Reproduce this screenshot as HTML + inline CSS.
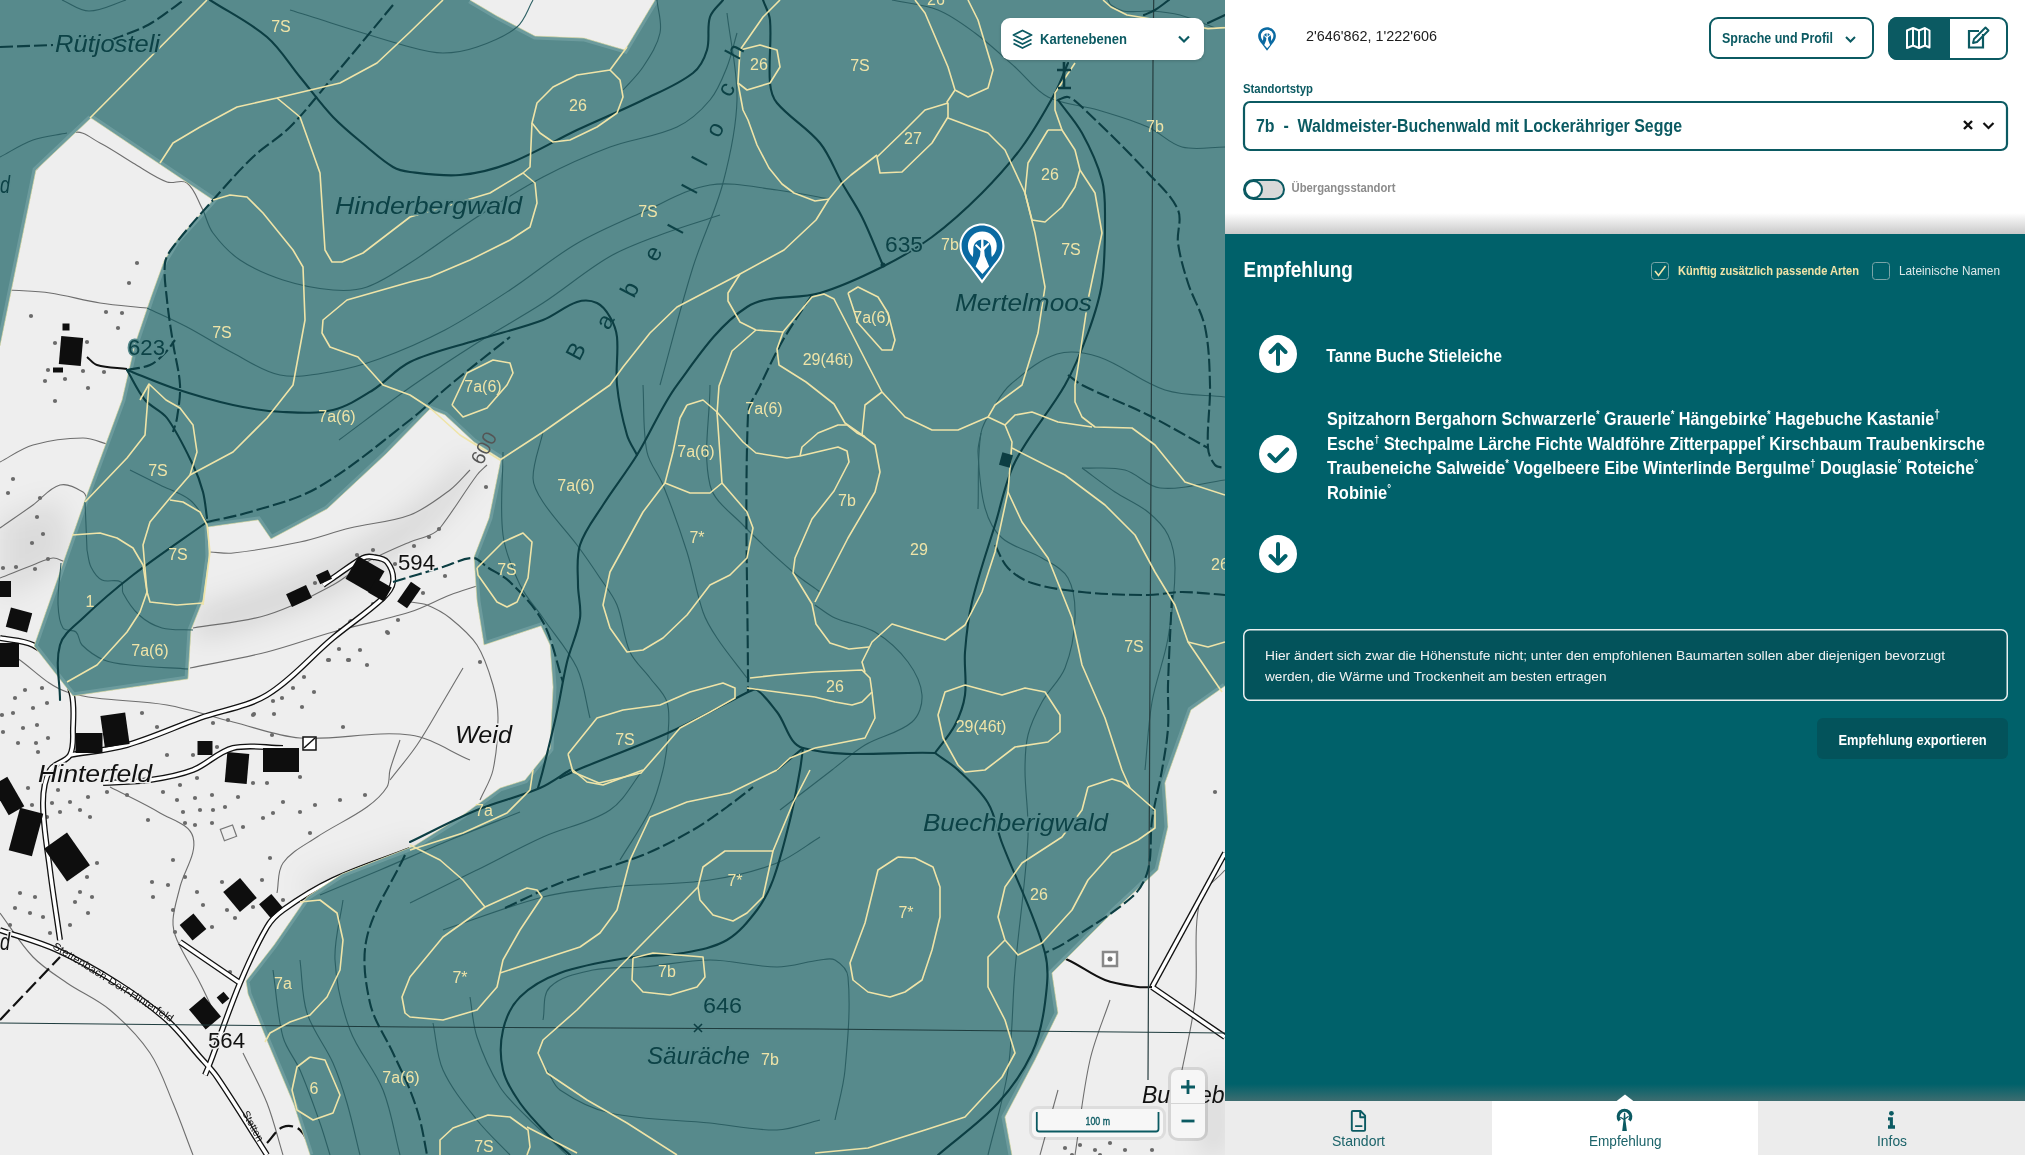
<!DOCTYPE html>
<html><head><meta charset="utf-8"><title>Empfehlung</title>
<style>
*{box-sizing:border-box;margin:0;padding:0}
html,body{width:2025px;height:1155px;overflow:hidden;background:#fff;font-family:"Liberation Sans",sans-serif}
#map{position:absolute;left:0;top:0;width:1225px;height:1155px;overflow:hidden}
#panel{position:absolute;left:1225px;top:0;width:800px;height:1155px;overflow:hidden}
</style></head><body>
<div id="map">
<svg width="1225" height="1155" viewBox="0 0 1225 1155" style="position:absolute;left:0;top:0">
<defs><linearGradient id="hs" x1="0" y1="0" x2="1" y2="1"><stop offset="0" stop-color="#f3f3f3"/><stop offset="1" stop-color="#e9e9e9"/></linearGradient></defs>
<rect width="1225" height="1155" fill="#eeeeee"/>
<filter id="bl" x="-20%" y="-20%" width="140%" height="140%"><feGaussianBlur stdDeviation="14"/></filter>
<g filter="url(#bl)" fill="#000"><path d="M195,640 C260,625 330,600 380,565 C420,540 450,510 480,470 L470,455 C430,500 380,535 330,560 C280,585 230,600 195,610 Z" opacity="0.10"/><path d="M0,520 L60,500 L70,560 L0,600 Z" opacity="0.08"/><path d="M1205,1085 L1225,1065 L1225,1155 L1200,1155 Z" opacity="0.10"/><path d="M300,880 L420,840 L440,870 L330,920 Z" opacity="0.07"/></g>
<path d="M36.0,170.0 C48.3,157.7 56.9,139.8 73.0,133.0 C81.8,129.3 91.4,138.7 100.0,143.0 C111.5,148.8 121.9,156.5 133.0,163.0 C144.2,169.5 154.8,177.5 167.0,182.0 C173.3,184.3 181.7,178.9 187.0,183.0 C195.3,189.4 197.7,201.0 203.0,210.0" fill="none" stroke="#6e6e6e" stroke-width="1.1"/>
<path d="M10.0,290.0 C23.3,291.0 36.8,291.1 50.0,293.0 C66.8,295.4 83.2,300.4 100.0,303.0 C115.6,305.4 131.3,306.3 147.0,308.0" fill="none" stroke="#6e6e6e" stroke-width="1.1"/>
<path d="M0.0,462.0 C11.0,456.3 21.1,448.4 33.0,445.0 C49.2,440.3 66.2,438.0 83.0,438.0 C92.3,438.0 101.0,442.7 110.0,445.0" fill="none" stroke="#6e6e6e" stroke-width="1.1"/>
<path d="M0.0,528.0 C11.0,520.3 22.1,512.8 33.0,505.0 C42.1,498.5 49.2,487.8 60.0,485.0 C67.8,483.0 76.1,487.8 83.0,492.0 C86.2,493.9 86.3,498.7 88.0,502.0" fill="none" stroke="#6e6e6e" stroke-width="1.1"/>
<path d="M0.0,578.0 C11.0,573.7 21.9,569.2 33.0,565.0 C39.6,562.5 46.0,558.7 53.0,558.0 C57.2,557.6 61.0,560.7 65.0,562.0" fill="none" stroke="#6e6e6e" stroke-width="1.1"/>
<path d="M193.0,628.0 C217.7,623.7 243.1,622.4 267.0,615.0 C290.1,607.9 311.6,596.3 333.0,585.0 C345.1,578.6 355.1,568.7 367.0,562.0 C380.8,554.3 395.5,548.2 410.0,542.0 C416.5,539.2 423.6,538.0 430.0,535.0 C433.7,533.3 437.5,531.2 440.0,528.0 C453.3,511.0 464.1,492.3 477.0,475.0 C479.8,471.2 483.7,468.3 487.0,465.0" fill="none" stroke="#6e6e6e" stroke-width="1.1"/>
<path d="M190.0,668.0 C215.7,662.7 241.6,658.4 267.0,652.0 C289.3,646.4 310.9,638.2 333.0,632.0 C358.5,624.9 384.7,620.0 410.0,612.0 C423.8,607.6 436.5,600.2 450.0,595.0 C459.8,591.2 470.0,588.3 480.0,585.0" fill="none" stroke="#6e6e6e" stroke-width="1.1"/>
<path d="M210.0,552.0 C217.7,552.3 225.4,553.8 233.0,553.0 C255.5,550.5 277.9,546.7 300.0,542.0 C316.9,538.4 333.2,532.1 350.0,528.0 C369.9,523.1 390.9,522.3 410.0,515.0 C424.7,509.4 437.4,499.4 450.0,490.0 C457.5,484.3 463.3,476.7 470.0,470.0" fill="none" stroke="#6e6e6e" stroke-width="1.1"/>
<path d="M17.0,658.0 C33.7,669.3 47.8,686.0 67.0,692.0 C99.1,702.1 133.9,699.0 167.0,705.0 C189.4,709.0 211.0,716.5 233.0,722.0 C255.3,727.5 277.1,736.3 300.0,738.0 C336.6,740.7 373.6,730.3 410.0,735.0 C431.5,737.8 450.0,751.7 470.0,760.0" fill="none" stroke="#6e6e6e" stroke-width="1.1"/>
<path d="M410.0,602.0 C415.7,603.0 421.7,602.9 427.0,605.0 C435.2,608.3 443.1,612.5 450.0,618.0 C459.9,626.0 470.1,634.3 477.0,645.0 C484.8,657.1 489.0,671.2 493.0,685.0 C496.1,695.7 498.0,706.9 498.0,718.0 C498.0,735.4 496.7,753.0 493.0,770.0 C490.7,780.6 484.3,790.0 480.0,800.0" fill="none" stroke="#6e6e6e" stroke-width="1.1"/>
<path d="M463.0,668.0 C456.3,679.3 449.7,690.7 443.0,702.0 C434.4,716.4 426.4,731.1 417.0,745.0 C408.7,757.2 399.0,768.3 390.0,780.0" fill="none" stroke="#6e6e6e" stroke-width="1.1"/>
<path d="M110.0,787.0 C126.7,795.7 143.9,803.3 160.0,813.0 C171.7,820.0 189.5,823.9 193.0,837.0 C197.5,853.6 184.0,870.3 180.0,887.0 C177.4,897.9 173.6,908.8 173.0,920.0 C172.6,926.8 174.3,933.8 177.0,940.0 C183.4,954.9 192.6,968.5 200.0,983.0 C204.6,991.9 208.7,1001.0 213.0,1010.0" fill="none" stroke="#6e6e6e" stroke-width="1.1"/>
<path d="M0.0,913.0 C11.0,927.7 20.3,943.8 33.0,957.0 C42.9,967.3 55.2,974.9 67.0,983.0 C80.9,992.6 97.1,999.1 110.0,1010.0 C125.0,1022.6 139.0,1036.8 150.0,1053.0 C160.3,1068.2 165.9,1086.1 173.0,1103.0 C180.2,1120.1 186.3,1137.7 193.0,1155.0" fill="none" stroke="#6e6e6e" stroke-width="1.1"/>
<path d="M243.0,1053.0 C251.0,1069.7 260.3,1085.8 267.0,1103.0 C273.6,1119.9 277.7,1137.7 283.0,1155.0" fill="none" stroke="#6e6e6e" stroke-width="1.1"/>
<path d="M277.0,893.0 C279.0,883.0 277.1,871.3 283.0,863.0 C291.3,851.4 305.1,844.9 317.0,837.0 C333.2,826.2 351.2,818.3 367.0,807.0 C374.7,801.5 382.0,795.0 387.0,787.0 C390.0,782.1 388.5,775.5 390.0,770.0 C392.8,759.8 396.7,750.0 400.0,740.0" fill="none" stroke="#6e6e6e" stroke-width="1.1"/>
<path d="M1225.0,870.0 C1216.7,880.0 1202.9,887.3 1200.0,900.0 C1192.5,932.5 1198.7,966.8 1195.0,1000.0 C1192.0,1027.0 1185.0,1053.3 1180.0,1080.0" fill="none" stroke="#6e6e6e" stroke-width="1.1"/>
<path d="M1110.0,1000.0 C1103.3,1020.0 1094.6,1039.4 1090.0,1060.0 C1082.9,1091.3 1080.0,1123.3 1075.0,1155.0" fill="none" stroke="#6e6e6e" stroke-width="1.1"/>
<path d="M1058.0,1090.0 L1040.0,1155.0" fill="none" stroke="#6e6e6e" stroke-width="1.1"/>
<circle cx="137" cy="263" r="2.1" fill="#6a6a6a"/>
<circle cx="129" cy="283" r="2.1" fill="#6a6a6a"/>
<circle cx="31" cy="316" r="2.1" fill="#6a6a6a"/>
<circle cx="106" cy="312" r="2.1" fill="#6a6a6a"/>
<circle cx="122" cy="313" r="2.1" fill="#6a6a6a"/>
<circle cx="118" cy="328" r="2.1" fill="#6a6a6a"/>
<circle cx="55" cy="343" r="2.1" fill="#6a6a6a"/>
<circle cx="87" cy="342" r="2.1" fill="#6a6a6a"/>
<circle cx="48" cy="370" r="2.1" fill="#6a6a6a"/>
<circle cx="83" cy="371" r="2.1" fill="#6a6a6a"/>
<circle cx="104" cy="372" r="2.1" fill="#6a6a6a"/>
<circle cx="45" cy="381" r="2.1" fill="#6a6a6a"/>
<circle cx="65" cy="379" r="2.1" fill="#6a6a6a"/>
<circle cx="88" cy="388" r="2.1" fill="#6a6a6a"/>
<circle cx="55" cy="401" r="2.1" fill="#6a6a6a"/>
<circle cx="13" cy="479" r="2.1" fill="#6a6a6a"/>
<circle cx="8" cy="493" r="2.1" fill="#6a6a6a"/>
<circle cx="40" cy="498" r="2.1" fill="#6a6a6a"/>
<circle cx="37" cy="517" r="2.1" fill="#6a6a6a"/>
<circle cx="43" cy="534" r="2.1" fill="#6a6a6a"/>
<circle cx="32" cy="543" r="2.1" fill="#6a6a6a"/>
<circle cx="48" cy="559" r="2.1" fill="#6a6a6a"/>
<circle cx="35" cy="569" r="2.1" fill="#6a6a6a"/>
<circle cx="3" cy="568" r="2.1" fill="#6a6a6a"/>
<circle cx="16" cy="567" r="2.1" fill="#6a6a6a"/>
<circle cx="357" cy="555" r="2.1" fill="#6a6a6a"/>
<circle cx="373" cy="550" r="2.1" fill="#6a6a6a"/>
<circle cx="395" cy="564" r="2.1" fill="#6a6a6a"/>
<circle cx="414" cy="546" r="2.1" fill="#6a6a6a"/>
<circle cx="429" cy="537" r="2.1" fill="#6a6a6a"/>
<circle cx="439" cy="529" r="2.1" fill="#6a6a6a"/>
<circle cx="486" cy="487" r="2.1" fill="#6a6a6a"/>
<circle cx="315" cy="583" r="2.1" fill="#6a6a6a"/>
<circle cx="383" cy="595" r="2.1" fill="#6a6a6a"/>
<circle cx="373" cy="604" r="2.1" fill="#6a6a6a"/>
<circle cx="423" cy="593" r="2.1" fill="#6a6a6a"/>
<circle cx="445" cy="576" r="2.1" fill="#6a6a6a"/>
<circle cx="351" cy="621" r="2.1" fill="#6a6a6a"/>
<circle cx="340" cy="630" r="2.1" fill="#6a6a6a"/>
<circle cx="398" cy="620" r="2.1" fill="#6a6a6a"/>
<circle cx="387" cy="632" r="2.1" fill="#6a6a6a"/>
<circle cx="339" cy="649" r="2.1" fill="#6a6a6a"/>
<circle cx="360" cy="650" r="2.1" fill="#6a6a6a"/>
<circle cx="329" cy="660" r="2.1" fill="#6a6a6a"/>
<circle cx="349" cy="660" r="2.1" fill="#6a6a6a"/>
<circle cx="367" cy="665" r="2.1" fill="#6a6a6a"/>
<circle cx="304" cy="677" r="2.1" fill="#6a6a6a"/>
<circle cx="293" cy="688" r="2.1" fill="#6a6a6a"/>
<circle cx="314" cy="692" r="2.1" fill="#6a6a6a"/>
<circle cx="273" cy="701" r="2.1" fill="#6a6a6a"/>
<circle cx="282" cy="698" r="2.1" fill="#6a6a6a"/>
<circle cx="302" cy="707" r="2.1" fill="#6a6a6a"/>
<circle cx="254" cy="714" r="2.1" fill="#6a6a6a"/>
<circle cx="274" cy="714" r="2.1" fill="#6a6a6a"/>
<circle cx="480" cy="662" r="2.1" fill="#6a6a6a"/>
<circle cx="338" cy="632" r="2.1" fill="#6a6a6a"/>
<circle cx="350" cy="622" r="2.1" fill="#6a6a6a"/>
<circle cx="328" cy="660" r="2.1" fill="#6a6a6a"/>
<circle cx="348" cy="660" r="2.1" fill="#6a6a6a"/>
<circle cx="388" cy="633" r="2.1" fill="#6a6a6a"/>
<circle cx="253" cy="715" r="2.1" fill="#6a6a6a"/>
<circle cx="228" cy="720" r="2.1" fill="#6a6a6a"/>
<circle cx="213" cy="723" r="2.1" fill="#6a6a6a"/>
<circle cx="157" cy="727" r="2.1" fill="#6a6a6a"/>
<circle cx="142" cy="713" r="2.1" fill="#6a6a6a"/>
<circle cx="167" cy="755" r="2.1" fill="#6a6a6a"/>
<circle cx="193" cy="755" r="2.1" fill="#6a6a6a"/>
<circle cx="217" cy="747" r="2.1" fill="#6a6a6a"/>
<circle cx="272" cy="735" r="2.1" fill="#6a6a6a"/>
<circle cx="343" cy="727" r="2.1" fill="#6a6a6a"/>
<circle cx="25" cy="690" r="2.1" fill="#6a6a6a"/>
<circle cx="15" cy="698" r="2.1" fill="#6a6a6a"/>
<circle cx="42" cy="688" r="2.1" fill="#6a6a6a"/>
<circle cx="33" cy="708" r="2.1" fill="#6a6a6a"/>
<circle cx="47" cy="703" r="2.1" fill="#6a6a6a"/>
<circle cx="2" cy="715" r="2.1" fill="#6a6a6a"/>
<circle cx="13" cy="713" r="2.1" fill="#6a6a6a"/>
<circle cx="23" cy="728" r="2.1" fill="#6a6a6a"/>
<circle cx="37" cy="725" r="2.1" fill="#6a6a6a"/>
<circle cx="3" cy="732" r="2.1" fill="#6a6a6a"/>
<circle cx="18" cy="743" r="2.1" fill="#6a6a6a"/>
<circle cx="36" cy="743" r="2.1" fill="#6a6a6a"/>
<circle cx="48" cy="738" r="2.1" fill="#6a6a6a"/>
<circle cx="38" cy="752" r="2.1" fill="#6a6a6a"/>
<circle cx="28" cy="788" r="2.1" fill="#6a6a6a"/>
<circle cx="58" cy="790" r="2.1" fill="#6a6a6a"/>
<circle cx="88" cy="797" r="2.1" fill="#6a6a6a"/>
<circle cx="70" cy="802" r="2.1" fill="#6a6a6a"/>
<circle cx="107" cy="792" r="2.1" fill="#6a6a6a"/>
<circle cx="127" cy="795" r="2.1" fill="#6a6a6a"/>
<circle cx="163" cy="792" r="2.1" fill="#6a6a6a"/>
<circle cx="180" cy="785" r="2.1" fill="#6a6a6a"/>
<circle cx="197" cy="778" r="2.1" fill="#6a6a6a"/>
<circle cx="52" cy="803" r="2.1" fill="#6a6a6a"/>
<circle cx="32" cy="805" r="2.1" fill="#6a6a6a"/>
<circle cx="60" cy="812" r="2.1" fill="#6a6a6a"/>
<circle cx="80" cy="810" r="2.1" fill="#6a6a6a"/>
<circle cx="47" cy="817" r="2.1" fill="#6a6a6a"/>
<circle cx="35" cy="815" r="2.1" fill="#6a6a6a"/>
<circle cx="90" cy="817" r="2.1" fill="#6a6a6a"/>
<circle cx="177" cy="800" r="2.1" fill="#6a6a6a"/>
<circle cx="195" cy="798" r="2.1" fill="#6a6a6a"/>
<circle cx="212" cy="795" r="2.1" fill="#6a6a6a"/>
<circle cx="238" cy="797" r="2.1" fill="#6a6a6a"/>
<circle cx="253" cy="783" r="2.1" fill="#6a6a6a"/>
<circle cx="267" cy="783" r="2.1" fill="#6a6a6a"/>
<circle cx="283" cy="802" r="2.1" fill="#6a6a6a"/>
<circle cx="300" cy="777" r="2.1" fill="#6a6a6a"/>
<circle cx="183" cy="812" r="2.1" fill="#6a6a6a"/>
<circle cx="200" cy="810" r="2.1" fill="#6a6a6a"/>
<circle cx="213" cy="810" r="2.1" fill="#6a6a6a"/>
<circle cx="225" cy="807" r="2.1" fill="#6a6a6a"/>
<circle cx="185" cy="823" r="2.1" fill="#6a6a6a"/>
<circle cx="195" cy="825" r="2.1" fill="#6a6a6a"/>
<circle cx="212" cy="823" r="2.1" fill="#6a6a6a"/>
<circle cx="148" cy="820" r="2.1" fill="#6a6a6a"/>
<circle cx="243" cy="827" r="2.1" fill="#6a6a6a"/>
<circle cx="263" cy="818" r="2.1" fill="#6a6a6a"/>
<circle cx="273" cy="813" r="2.1" fill="#6a6a6a"/>
<circle cx="300" cy="812" r="2.1" fill="#6a6a6a"/>
<circle cx="315" cy="805" r="2.1" fill="#6a6a6a"/>
<circle cx="340" cy="800" r="2.1" fill="#6a6a6a"/>
<circle cx="365" cy="795" r="2.1" fill="#6a6a6a"/>
<circle cx="310" cy="833" r="2.1" fill="#6a6a6a"/>
<circle cx="270" cy="858" r="2.1" fill="#6a6a6a"/>
<circle cx="173" cy="860" r="2.1" fill="#6a6a6a"/>
<circle cx="185" cy="877" r="2.1" fill="#6a6a6a"/>
<circle cx="97" cy="863" r="2.1" fill="#6a6a6a"/>
<circle cx="87" cy="877" r="2.1" fill="#6a6a6a"/>
<circle cx="80" cy="892" r="2.1" fill="#6a6a6a"/>
<circle cx="92" cy="897" r="2.1" fill="#6a6a6a"/>
<circle cx="75" cy="902" r="2.1" fill="#6a6a6a"/>
<circle cx="20" cy="893" r="2.1" fill="#6a6a6a"/>
<circle cx="35" cy="897" r="2.1" fill="#6a6a6a"/>
<circle cx="15" cy="908" r="2.1" fill="#6a6a6a"/>
<circle cx="30" cy="913" r="2.1" fill="#6a6a6a"/>
<circle cx="43" cy="917" r="2.1" fill="#6a6a6a"/>
<circle cx="10" cy="925" r="2.1" fill="#6a6a6a"/>
<circle cx="70" cy="925" r="2.1" fill="#6a6a6a"/>
<circle cx="88" cy="913" r="2.1" fill="#6a6a6a"/>
<circle cx="50" cy="933" r="2.1" fill="#6a6a6a"/>
<circle cx="152" cy="882" r="2.1" fill="#6a6a6a"/>
<circle cx="168" cy="885" r="2.1" fill="#6a6a6a"/>
<circle cx="153" cy="897" r="2.1" fill="#6a6a6a"/>
<circle cx="197" cy="892" r="2.1" fill="#6a6a6a"/>
<circle cx="203" cy="905" r="2.1" fill="#6a6a6a"/>
<circle cx="222" cy="882" r="2.1" fill="#6a6a6a"/>
<circle cx="227" cy="910" r="2.1" fill="#6a6a6a"/>
<circle cx="235" cy="918" r="2.1" fill="#6a6a6a"/>
<circle cx="253" cy="907" r="2.1" fill="#6a6a6a"/>
<circle cx="262" cy="880" r="2.1" fill="#6a6a6a"/>
<circle cx="283" cy="900" r="2.1" fill="#6a6a6a"/>
<circle cx="175" cy="932" r="2.1" fill="#6a6a6a"/>
<circle cx="212" cy="927" r="2.1" fill="#6a6a6a"/>
<circle cx="173" cy="910" r="2.1" fill="#6a6a6a"/>
<circle cx="230" cy="972" r="2.1" fill="#6a6a6a"/>
<circle cx="1215" cy="792" r="2.1" fill="#6a6a6a"/>
<circle cx="1152" cy="1150" r="2.1" fill="#6a6a6a"/>
<circle cx="1065" cy="1148" r="2.1" fill="#6a6a6a"/>
<circle cx="1080" cy="1145" r="2.1" fill="#6a6a6a"/>
<circle cx="1095" cy="1150" r="2.1" fill="#6a6a6a"/>
<circle cx="1110" cy="1143" r="2.1" fill="#6a6a6a"/>
<circle cx="1125" cy="1150" r="2.1" fill="#6a6a6a"/>
<circle cx="1072" cy="1155" r="2.1" fill="#6a6a6a"/>
<circle cx="1100" cy="1155" r="2.1" fill="#6a6a6a"/>
<path d="M0.0,638.0 C11.0,640.3 22.9,640.0 33.0,645.0 C43.6,650.3 52.7,658.7 60.0,668.0 C66.1,675.8 69.9,685.4 72.0,695.0 C74.3,705.8 73.4,717.0 73.0,728.0 C72.7,737.1 74.3,747.1 70.0,755.0 C66.0,762.3 54.1,762.7 50.0,770.0 C44.5,779.8 43.0,791.8 43.0,803.0 C43.0,825.5 47.2,847.7 50.0,870.0 C52.9,893.4 56.7,916.7 60.0,940.0" fill="none" stroke="#111" stroke-width="6" stroke-linejoin="round"/>
<path d="M70.0,755.0 C89.0,751.7 108.4,750.3 127.0,745.0 C152.0,737.9 175.6,726.7 200.0,718.0 C222.2,710.1 246.8,707.2 267.0,695.0 C291.9,680.0 310.7,656.6 333.0,638.0 C349.4,624.3 367.4,612.6 383.0,598.0 C387.6,593.7 392.3,588.3 393.0,582.0 C393.8,575.1 391.3,567.4 387.0,562.0 C383.9,558.1 377.9,557.8 373.0,557.0 C369.7,556.4 366.0,556.4 363.0,558.0 C352.4,563.6 343.0,571.3 333.0,578.0 C329.6,580.3 326.3,582.7 323.0,585.0" fill="none" stroke="#111" stroke-width="6" stroke-linejoin="round"/>
<path d="M103.0,783.0 C118.7,782.0 134.5,782.2 150.0,780.0 C164.6,777.9 179.3,775.3 193.0,770.0 C207.2,764.5 218.2,751.6 233.0,748.0 C249.2,744.0 266.3,748.0 283.0,748.0" fill="none" stroke="#111" stroke-width="6" stroke-linejoin="round"/>
<path d="M0.0,930.0 C19.0,936.7 38.7,941.7 57.0,950.0 C77.8,959.4 97.7,970.7 117.0,983.0 C134.5,994.1 151.5,1006.2 167.0,1020.0 C179.3,1031.0 189.1,1044.6 200.0,1057.0 C205.8,1063.6 212.1,1069.8 217.0,1077.0 C234.4,1102.5 250.3,1129.0 267.0,1155.0" fill="none" stroke="#111" stroke-width="6" stroke-linejoin="round"/>
<path d="M410.0,850.0 C384.3,860.0 357.9,868.2 333.0,880.0 C315.4,888.3 298.8,898.7 283.0,910.0 C276.7,914.5 270.9,920.3 267.0,927.0 C256.5,944.9 248.0,963.9 240.0,983.0 C229.0,1009.3 220.1,1036.4 210.0,1063.0 C208.5,1067.1 206.7,1071.0 205.0,1075.0" fill="none" stroke="#111" stroke-width="6" stroke-linejoin="round"/>
<path d="M180.0,942.0 L240.0,983.0" fill="none" stroke="#111" stroke-width="6" stroke-linejoin="round"/>
<path d="M1152.0,987.0 L1225.0,853.0" fill="none" stroke="#111" stroke-width="6" stroke-linejoin="round"/>
<path d="M1152.0,987.0 L1225.0,1037.0" fill="none" stroke="#111" stroke-width="6" stroke-linejoin="round"/>
<path d="M0.0,638.0 C11.0,640.3 22.9,640.0 33.0,645.0 C43.6,650.3 52.7,658.7 60.0,668.0 C66.1,675.8 69.9,685.4 72.0,695.0 C74.3,705.8 73.4,717.0 73.0,728.0 C72.7,737.1 74.3,747.1 70.0,755.0 C66.0,762.3 54.1,762.7 50.0,770.0 C44.5,779.8 43.0,791.8 43.0,803.0 C43.0,825.5 47.2,847.7 50.0,870.0 C52.9,893.4 56.7,916.7 60.0,940.0" fill="none" stroke="#fff" stroke-width="3.4" stroke-linejoin="round"/>
<path d="M70.0,755.0 C89.0,751.7 108.4,750.3 127.0,745.0 C152.0,737.9 175.6,726.7 200.0,718.0 C222.2,710.1 246.8,707.2 267.0,695.0 C291.9,680.0 310.7,656.6 333.0,638.0 C349.4,624.3 367.4,612.6 383.0,598.0 C387.6,593.7 392.3,588.3 393.0,582.0 C393.8,575.1 391.3,567.4 387.0,562.0 C383.9,558.1 377.9,557.8 373.0,557.0 C369.7,556.4 366.0,556.4 363.0,558.0 C352.4,563.6 343.0,571.3 333.0,578.0 C329.6,580.3 326.3,582.7 323.0,585.0" fill="none" stroke="#fff" stroke-width="3.4" stroke-linejoin="round"/>
<path d="M103.0,783.0 C118.7,782.0 134.5,782.2 150.0,780.0 C164.6,777.9 179.3,775.3 193.0,770.0 C207.2,764.5 218.2,751.6 233.0,748.0 C249.2,744.0 266.3,748.0 283.0,748.0" fill="none" stroke="#fff" stroke-width="3.4" stroke-linejoin="round"/>
<path d="M0.0,930.0 C19.0,936.7 38.7,941.7 57.0,950.0 C77.8,959.4 97.7,970.7 117.0,983.0 C134.5,994.1 151.5,1006.2 167.0,1020.0 C179.3,1031.0 189.1,1044.6 200.0,1057.0 C205.8,1063.6 212.1,1069.8 217.0,1077.0 C234.4,1102.5 250.3,1129.0 267.0,1155.0" fill="none" stroke="#fff" stroke-width="3.4" stroke-linejoin="round"/>
<path d="M410.0,850.0 C384.3,860.0 357.9,868.2 333.0,880.0 C315.4,888.3 298.8,898.7 283.0,910.0 C276.7,914.5 270.9,920.3 267.0,927.0 C256.5,944.9 248.0,963.9 240.0,983.0 C229.0,1009.3 220.1,1036.4 210.0,1063.0 C208.5,1067.1 206.7,1071.0 205.0,1075.0" fill="none" stroke="#fff" stroke-width="3.4" stroke-linejoin="round"/>
<path d="M180.0,942.0 L240.0,983.0" fill="none" stroke="#fff" stroke-width="3.4" stroke-linejoin="round"/>
<path d="M1152.0,987.0 L1225.0,853.0" fill="none" stroke="#fff" stroke-width="3.4" stroke-linejoin="round"/>
<path d="M1152.0,987.0 L1225.0,1037.0" fill="none" stroke="#fff" stroke-width="3.4" stroke-linejoin="round"/>
<path d="M0.0,1020.0 L60.0,957.0" fill="none" stroke="#111" stroke-width="2.2" stroke-dasharray="14 5"/>
<path d="M267.0,1143.0 C272.3,1137.7 276.0,1129.8 283.0,1127.0 C288.4,1124.9 295.8,1126.1 300.0,1130.0 C306.9,1136.4 308.7,1146.7 313.0,1155.0" fill="none" stroke="#111" stroke-width="2.2" stroke-dasharray="14 5"/>
<path d="M1045.0,953.0 C1052.7,955.3 1060.7,956.7 1068.0,960.0 C1080.8,965.8 1091.9,975.0 1105.0,980.0 C1115.5,984.0 1126.9,985.3 1138.0,987.0 C1142.6,987.7 1147.3,987.0 1152.0,987.0" fill="none" stroke="#111" stroke-width="2"/>
<path d="M87.0,357.0 C90.3,359.7 92.9,363.8 97.0,365.0 C106.7,367.9 117.0,367.7 127.0,369.0" fill="none" stroke="#111" stroke-width="2"/>
<rect x="60.0" y="337.0" width="22" height="28" fill="#0e0e0e" transform="rotate(5 71 351)"/>
<rect x="62.5" y="323.5" width="7" height="7" fill="#0e0e0e" transform="rotate(0 66 327)"/>
<rect x="53.0" y="367.5" width="10" height="5" fill="#0e0e0e" transform="rotate(0 58 370)"/>
<rect x="-1.0" y="581.0" width="12" height="16" fill="#0e0e0e" transform="rotate(0 5 589)"/>
<rect x="8.0" y="610.0" width="22" height="20" fill="#0e0e0e" transform="rotate(15 19 620)"/>
<rect x="-1.0" y="643.0" width="20" height="24" fill="#0e0e0e" transform="rotate(0 9 655)"/>
<rect x="75.5" y="733.0" width="27" height="20" fill="#0e0e0e" transform="rotate(0 89 743)"/>
<rect x="102.5" y="714.0" width="25" height="32" fill="#0e0e0e" transform="rotate(-8 115 730)"/>
<rect x="197.5" y="741.0" width="15" height="14" fill="#0e0e0e" transform="rotate(0 205 748)"/>
<rect x="226.0" y="753.0" width="22" height="30" fill="#0e0e0e" transform="rotate(5 237 768)"/>
<rect x="263.0" y="748.0" width="36" height="24" fill="#0e0e0e" transform="rotate(0 281 760)"/>
<rect x="288.0" y="589.0" width="22" height="14" fill="#0e0e0e" transform="rotate(-25 299 596)"/>
<rect x="317.5" y="572.0" width="13" height="10" fill="#0e0e0e" transform="rotate(-25 324 577)"/>
<rect x="350.0" y="562.0" width="30" height="26" fill="#0e0e0e" transform="rotate(30 365 575)"/>
<rect x="371.0" y="582.0" width="18" height="16" fill="#0e0e0e" transform="rotate(30 380 590)"/>
<rect x="403.0" y="583.0" width="12" height="24" fill="#0e0e0e" transform="rotate(35 409 595)"/>
<rect x="-1.0" y="779.0" width="18" height="34" fill="#0e0e0e" transform="rotate(-30 8 796)"/>
<rect x="14.0" y="810.0" width="24" height="44" fill="#0e0e0e" transform="rotate(15 26 832)"/>
<rect x="53.0" y="837.0" width="28" height="40" fill="#0e0e0e" transform="rotate(-35 67 857)"/>
<rect x="229.0" y="882.0" width="22" height="26" fill="#0e0e0e" transform="rotate(-40 240 895)"/>
<rect x="263.0" y="897.0" width="16" height="18" fill="#0e0e0e" transform="rotate(-40 271 906)"/>
<rect x="184.0" y="917.0" width="18" height="20" fill="#0e0e0e" transform="rotate(-40 193 927)"/>
<rect x="195.0" y="1000.0" width="20" height="26" fill="#0e0e0e" transform="rotate(-40 205 1013)"/>
<rect x="218.5" y="993.5" width="9" height="9" fill="#0e0e0e" transform="rotate(-40 223 998)"/>
<path d="M0,0 H1225 V1155 H0 Z M91.0,118.0 L213.0,200.0 L197.0,218.0 L177.0,240.0 L164.0,261.0 L151.0,297.0 L135.0,344.0 L122.0,400.0 L85.0,500.0 L34.0,646.0 L73.0,696.0 L188.0,679.0 L191.0,630.0 L203.0,600.0 L209.0,557.0 L208.0,527.0 L258.0,520.0 L271.0,539.0 L327.0,509.0 L386.0,454.0 L430.0,409.0 L445.0,415.0 L474.0,442.0 L501.0,459.0 L489.0,518.0 L474.0,557.0 L477.0,601.0 L484.0,645.0 L541.0,626.0 L550.0,645.0 L553.0,687.0 L550.0,749.0 L525.0,780.0 L500.0,788.0 L463.0,815.0 L414.0,846.0 L342.0,874.0 L307.0,897.0 L274.0,945.0 L246.0,981.0 L248.0,994.0 L268.0,1043.0 L294.0,1105.0 L310.0,1155.0 L0.0,1155.0 L0.0,346.0 L36.0,170.0 Z M470.0,0.0 L497.0,16.0 L535.0,36.0 L584.0,38.0 L625.0,50.0 L655.0,0.0 Z M1225.0,686.0 L1191.0,710.0 L1165.0,783.0 L1168.0,827.0 L1158.0,870.0 L1115.0,910.0 L1052.0,973.0 L1058.0,1013.0 L1035.0,1060.0 L1005.0,1117.0 L1012.0,1155.0 L1225.0,1155.0 Z" fill="#578a8c" fill-rule="evenodd"/>
<clipPath id="tc"><path d="M0,0 H1225 V1155 H0 Z M91.0,118.0 L213.0,200.0 L197.0,218.0 L177.0,240.0 L164.0,261.0 L151.0,297.0 L135.0,344.0 L122.0,400.0 L85.0,500.0 L34.0,646.0 L73.0,696.0 L188.0,679.0 L191.0,630.0 L203.0,600.0 L209.0,557.0 L208.0,527.0 L258.0,520.0 L271.0,539.0 L327.0,509.0 L386.0,454.0 L430.0,409.0 L445.0,415.0 L474.0,442.0 L501.0,459.0 L489.0,518.0 L474.0,557.0 L477.0,601.0 L484.0,645.0 L541.0,626.0 L550.0,645.0 L553.0,687.0 L550.0,749.0 L525.0,780.0 L500.0,788.0 L463.0,815.0 L414.0,846.0 L342.0,874.0 L307.0,897.0 L274.0,945.0 L246.0,981.0 L248.0,994.0 L268.0,1043.0 L294.0,1105.0 L310.0,1155.0 L0.0,1155.0 L0.0,346.0 L36.0,170.0 Z M470.0,0.0 L497.0,16.0 L535.0,36.0 L584.0,38.0 L625.0,50.0 L655.0,0.0 Z M1225.0,686.0 L1191.0,710.0 L1165.0,783.0 L1168.0,827.0 L1158.0,870.0 L1115.0,910.0 L1052.0,973.0 L1058.0,1013.0 L1035.0,1060.0 L1005.0,1117.0 L1012.0,1155.0 L1225.0,1155.0 Z" clip-rule="evenodd"/></clipPath>
<path d="M91.0,118.0 L213.0,200.0 L197.0,218.0 L177.0,240.0 L164.0,261.0 L151.0,297.0 L135.0,344.0 L122.0,400.0 L85.0,500.0 L34.0,646.0 L73.0,696.0 L188.0,679.0 L191.0,630.0 L203.0,600.0 L209.0,557.0 L208.0,527.0 L258.0,520.0 L271.0,539.0 L327.0,509.0 L386.0,454.0 L430.0,409.0 L445.0,415.0 L474.0,442.0 L501.0,459.0 L489.0,518.0 L474.0,557.0 L477.0,601.0 L484.0,645.0 L541.0,626.0 L550.0,645.0 L553.0,687.0 L550.0,749.0 L525.0,780.0 L500.0,788.0 L463.0,815.0 L414.0,846.0 L342.0,874.0 L307.0,897.0 L274.0,945.0 L246.0,981.0 L248.0,994.0 L268.0,1043.0 L294.0,1105.0 L310.0,1155.0" fill="none" stroke="#79a6a8" stroke-width="7" stroke-opacity="0.6" clip-path="url(#tc)"/>
<path d="M91.0,118.0 L213.0,200.0 L197.0,218.0 L177.0,240.0 L164.0,261.0 L151.0,297.0 L135.0,344.0 L122.0,400.0 L85.0,500.0 L34.0,646.0 L73.0,696.0 L188.0,679.0 L191.0,630.0 L203.0,600.0 L209.0,557.0 L208.0,527.0 L258.0,520.0 L271.0,539.0 L327.0,509.0 L386.0,454.0 L430.0,409.0 L445.0,415.0 L474.0,442.0 L501.0,459.0 L489.0,518.0 L474.0,557.0 L477.0,601.0 L484.0,645.0 L541.0,626.0 L550.0,645.0 L553.0,687.0 L550.0,749.0 L525.0,780.0 L500.0,788.0 L463.0,815.0 L414.0,846.0 L342.0,874.0 L307.0,897.0 L274.0,945.0 L246.0,981.0 L248.0,994.0 L268.0,1043.0 L294.0,1105.0 L310.0,1155.0" fill="none" stroke="#efe4a8" stroke-width="1" stroke-opacity="0.6"/>
<path d="M0.0,346.0 L36.0,170.0 L91.0,118.0" fill="none" stroke="#79a6a8" stroke-width="7" stroke-opacity="0.6" clip-path="url(#tc)"/>
<path d="M0.0,346.0 L36.0,170.0 L91.0,118.0" fill="none" stroke="#efe4a8" stroke-width="1" stroke-opacity="0.6"/>
<path d="M470.0,0.0 L497.0,16.0 L535.0,36.0 L584.0,38.0 L625.0,50.0 L655.0,0.0" fill="none" stroke="#79a6a8" stroke-width="7" stroke-opacity="0.6" clip-path="url(#tc)"/>
<path d="M470.0,0.0 L497.0,16.0 L535.0,36.0 L584.0,38.0 L625.0,50.0 L655.0,0.0" fill="none" stroke="#efe4a8" stroke-width="1" stroke-opacity="0.6"/>
<path d="M1225.0,686.0 L1191.0,710.0 L1165.0,783.0 L1168.0,827.0 L1158.0,870.0 L1115.0,910.0 L1052.0,973.0 L1058.0,1013.0 L1035.0,1060.0 L1005.0,1117.0 L1012.0,1155.0" fill="none" stroke="#79a6a8" stroke-width="7" stroke-opacity="0.6" clip-path="url(#tc)"/>
<path d="M1225.0,686.0 L1191.0,710.0 L1165.0,783.0 L1168.0,827.0 L1158.0,870.0 L1115.0,910.0 L1052.0,973.0 L1058.0,1013.0 L1035.0,1060.0 L1005.0,1117.0 L1012.0,1155.0" fill="none" stroke="#efe4a8" stroke-width="1" stroke-opacity="0.6"/>
<path d="M87.0,550.0 C88.3,555.7 88.4,561.8 91.0,567.0 C93.5,572.1 96.9,577.5 102.0,580.0 C107.7,582.8 115.6,578.6 121.0,582.0 C124.2,584.0 121.2,589.7 123.0,593.0 C127.3,601.0 132.3,608.9 139.0,615.0 C145.6,620.9 153.5,625.6 162.0,628.0 C172.0,630.8 182.7,629.3 193.0,630.0" fill="none" stroke="#2c5f63" stroke-width="1.1"/>
<path d="M61.0,563.0 C60.0,576.7 57.6,590.3 58.0,604.0 C58.3,612.2 58.6,621.1 63.0,628.0 C65.5,631.8 72.6,629.0 76.0,632.0 C79.6,635.2 78.6,641.6 82.0,645.0 C88.3,651.3 95.8,656.6 104.0,660.0 C112.1,663.4 121.2,664.1 130.0,665.0 C149.3,667.1 168.7,667.7 188.0,669.0" fill="none" stroke="#2c5f63" stroke-width="1.1"/>
<path d="M85.0,502.0 C85.3,509.7 85.7,517.3 86.0,525.0 C86.3,533.3 86.7,541.7 87.0,550.0" fill="none" stroke="#2c5f63" stroke-width="1.1"/>
<path d="M130.0,470.0 C140.0,475.0 150.0,480.0 160.0,485.0 C170.0,490.0 181.2,493.1 190.0,500.0 C197.3,505.7 201.3,514.7 207.0,522.0" fill="none" stroke="#2c5f63" stroke-width="1.1"/>
<path d="M0.0,157.0 C11.0,151.3 21.4,144.2 33.0,140.0 C43.9,136.1 55.7,135.3 67.0,133.0" fill="none" stroke="#2c5f63" stroke-width="1.1"/>
<path d="M203.0,210.0 C206.3,217.7 208.0,226.3 213.0,233.0 C220.6,243.2 229.4,252.9 240.0,260.0 C253.1,268.8 268.0,275.1 283.0,280.0 C299.2,285.2 316.1,288.6 333.0,290.0 C344.3,290.9 356.3,290.8 367.0,287.0 C382.5,281.6 396.2,271.8 410.0,263.0 C432.9,248.5 454.3,231.7 477.0,217.0 C498.6,203.0 520.2,189.0 543.0,177.0 C564.7,165.6 587.1,155.6 610.0,147.0 C631.8,138.9 655.9,136.9 677.0,127.0 C689.9,121.0 700.9,110.9 710.0,100.0 C717.9,90.5 722.4,78.5 727.0,67.0 C731.4,56.0 733.7,44.3 737.0,33.0" fill="none" stroke="#2c5f63" stroke-width="1.1"/>
<path d="M147.0,308.0 C160.3,314.3 173.9,320.2 187.0,327.0 C202.6,335.2 217.3,344.9 233.0,353.0 C248.4,360.9 263.0,371.7 280.0,375.0 C296.4,378.2 313.5,374.7 330.0,372.0 C346.7,369.3 363.1,364.8 379.0,359.0 C401.6,350.8 423.7,341.2 445.0,330.0 C467.5,318.1 488.7,304.0 510.0,290.0 C532.4,275.3 552.9,257.6 576.0,244.0 C597.3,231.5 620.3,222.0 643.0,212.0 C665.0,202.3 686.2,188.9 710.0,185.0 C732.1,181.4 754.8,187.4 777.0,190.0 C794.5,192.1 811.7,196.0 829.0,199.0" fill="none" stroke="#2c5f63" stroke-width="1.1"/>
<path d="M339.0,440.0 C363.3,422.0 387.2,403.4 412.0,386.0 C433.3,371.1 455.1,356.9 477.0,343.0 C498.7,329.2 521.4,317.0 543.0,303.0 C565.5,288.4 585.8,270.5 609.0,257.0 C625.0,247.7 642.7,241.6 660.0,235.0 C679.7,227.5 700.0,221.7 720.0,215.0" fill="none" stroke="#2c5f63" stroke-width="1.1"/>
<path d="M290.0,10.0 C330.0,22.3 369.7,35.7 410.0,47.0 C420.8,50.0 431.8,53.0 443.0,53.0 C454.5,53.0 466.1,50.8 477.0,47.0 C491.1,42.1 505.6,36.6 517.0,27.0 C525.0,20.3 527.7,9.0 533.0,0.0" fill="none" stroke="#2c5f63" stroke-width="1.1"/>
<path d="M62.0,0.0 C71.0,3.7 79.3,11.0 89.0,11.0 C101.9,11.0 113.7,3.7 126.0,0.0" fill="none" stroke="#2c5f63" stroke-width="1.1"/>
<path d="M657.0,0.0 C658.0,11.0 662.3,22.2 660.0,33.0 C657.4,45.4 649.9,56.4 643.0,67.0 C637.5,75.5 629.7,82.3 623.0,90.0" fill="none" stroke="#2c5f63" stroke-width="1.1"/>
<path d="M660.0,385.0 C671.0,345.7 680.8,306.0 693.0,267.0 C701.9,238.6 715.4,211.8 723.0,183.0 C730.1,155.9 736.3,128.0 737.0,100.0 C737.7,70.8 730.3,42.0 727.0,13.0" fill="none" stroke="#2c5f63" stroke-width="1.1"/>
<path d="M892.0,0.0 C907.3,3.3 923.4,4.2 938.0,10.0 C951.5,15.4 963.3,24.4 975.0,33.0 C989.1,43.4 1001.8,55.5 1015.0,67.0 C1026.2,76.8 1034.8,90.2 1048.0,97.0 C1063.3,104.9 1081.5,105.1 1098.0,110.0 C1114.9,115.1 1131.9,119.9 1148.0,127.0 C1160.0,132.3 1169.3,143.7 1182.0,147.0 C1195.9,150.6 1210.7,147.0 1225.0,147.0" fill="none" stroke="#2c5f63" stroke-width="1.1"/>
<path d="M543.0,432.0 C539.7,447.3 533.0,462.3 533.0,478.0 C533.0,486.7 538.2,494.8 543.0,502.0 C553.0,517.3 566.0,530.4 577.0,545.0 C585.0,555.7 592.6,566.8 600.0,578.0 C605.9,586.8 613.0,595.1 617.0,605.0 C623.1,620.1 623.3,637.2 630.0,652.0 C634.5,662.0 643.5,669.2 650.0,678.0 C655.8,685.9 664.0,692.7 667.0,702.0 C670.3,712.5 668.6,724.0 668.0,735.0 C667.3,746.8 665.8,758.5 663.0,770.0 C659.7,783.6 656.0,797.3 650.0,810.0 C641.6,827.5 630.0,843.3 620.0,860.0" fill="none" stroke="#2c5f63" stroke-width="1.1"/>
<path d="M643.0,385.0 C644.3,407.3 642.6,430.1 647.0,452.0 C649.4,464.0 658.5,473.6 663.0,485.0 C671.8,507.0 679.9,529.4 687.0,552.0 C693.2,571.7 696.2,592.5 703.0,612.0 C706.2,621.3 711.5,629.8 717.0,638.0 C726.2,651.9 737.0,664.7 747.0,678.0" fill="none" stroke="#2c5f63" stroke-width="1.1"/>
<path d="M503.0,452.0 C503.0,479.7 499.5,507.6 503.0,535.0 C505.2,552.5 512.4,569.1 520.0,585.0 C525.8,597.1 535.4,606.9 543.0,618.0 C554.4,634.6 568.4,649.8 577.0,668.0 C584.3,683.6 585.7,701.3 590.0,718.0" fill="none" stroke="#2c5f63" stroke-width="1.1"/>
<path d="M710.0,385.0 C710.0,418.3 702.4,452.6 710.0,485.0 C714.0,501.8 731.1,512.5 743.0,525.0 C758.8,541.6 775.7,557.0 793.0,572.0 C801.4,579.4 811.0,585.3 820.0,592.0" fill="none" stroke="#2c5f63" stroke-width="1.1"/>
<path d="M981.0,433.0 C980.0,439.3 977.7,445.6 978.0,452.0 C979.0,470.8 979.9,489.9 985.0,508.0 C988.1,519.1 993.4,530.4 1002.0,538.0 C1013.2,547.8 1029.3,550.3 1042.0,558.0 C1051.4,563.7 1062.7,568.4 1068.0,578.0 C1074.5,589.9 1075.5,604.5 1075.0,618.0 C1074.4,635.0 1071.2,652.2 1065.0,668.0 C1060.0,680.7 1048.6,690.0 1042.0,702.0 C1036.2,712.5 1030.9,723.4 1028.0,735.0 C1025.2,746.4 1025.0,758.3 1025.0,770.0 C1025.0,792.4 1029.1,814.7 1028.0,837.0 C1025.8,881.5 1018.8,925.6 1015.0,970.0 C1012.1,1003.3 1012.8,1036.9 1008.0,1070.0 C1003.8,1098.8 994.7,1126.7 988.0,1155.0" fill="none" stroke="#2c5f63" stroke-width="1.1"/>
<path d="M815.0,605.0 C821.7,609.3 827.7,614.7 835.0,618.0 C847.9,623.8 862.9,624.7 875.0,632.0 C887.7,639.7 899.1,650.1 908.0,662.0 C915.1,671.6 921.2,683.1 922.0,695.0 C922.6,704.6 919.2,715.7 912.0,722.0 C898.9,733.5 880.0,736.0 865.0,745.0 C853.2,752.1 843.0,761.6 832.0,770.0 C814.6,783.3 797.3,796.7 780.0,810.0" fill="none" stroke="#2c5f63" stroke-width="1.1"/>
<path d="M1082.0,468.0 C1093.0,476.0 1103.7,484.5 1115.0,492.0 C1125.7,499.1 1138.0,503.9 1148.0,512.0 C1155.9,518.4 1163.6,525.8 1168.0,535.0 C1172.9,545.1 1175.0,556.8 1175.0,568.0 C1175.0,591.4 1172.0,614.9 1168.0,638.0 C1164.3,659.7 1155.8,680.3 1152.0,702.0 C1148.1,724.4 1147.3,747.3 1145.0,770.0" fill="none" stroke="#2c5f63" stroke-width="1.1"/>
<path d="M410.0,903.0 C432.3,892.0 454.7,881.1 477.0,870.0 C499.0,859.1 520.6,847.1 543.0,837.0 C564.9,827.1 590.0,823.4 610.0,810.0 C624.4,800.4 632.0,783.3 643.0,770.0" fill="none" stroke="#2c5f63" stroke-width="1.1"/>
<path d="M443.0,930.0 C476.3,919.0 509.0,905.8 543.0,897.0 C564.9,891.4 587.5,889.3 610.0,887.0 C643.2,883.6 676.9,884.8 710.0,880.0 C732.8,876.7 755.5,871.4 777.0,863.0 C792.6,856.9 805.7,845.7 820.0,837.0" fill="none" stroke="#2c5f63" stroke-width="1.1"/>
<path d="M433.0,1023.0 C436.3,1038.7 436.4,1055.4 443.0,1070.0 C451.3,1088.4 464.5,1104.2 477.0,1120.0 C486.9,1132.6 499.0,1143.3 510.0,1155.0" fill="none" stroke="#2c5f63" stroke-width="1.1"/>
<path d="M470.0,997.0 C472.3,1010.3 472.7,1024.2 477.0,1037.0 C482.8,1054.4 490.3,1071.4 500.0,1087.0 C507.1,1098.4 517.6,1107.4 527.0,1117.0 C539.9,1130.1 553.7,1142.3 567.0,1155.0" fill="none" stroke="#2c5f63" stroke-width="1.1"/>
<path d="M543.0,1020.0 C545.3,1009.0 542.0,995.0 550.0,987.0 C560.9,976.1 577.9,973.2 593.0,970.0 C609.3,966.5 626.4,968.4 643.0,967.0 C665.4,965.1 687.5,960.0 710.0,960.0 C732.5,960.0 754.5,967.0 777.0,967.0 C791.5,967.0 805.6,961.7 820.0,960.0 C825.0,959.4 830.7,957.4 835.0,960.0 C841.1,963.7 847.4,969.9 848.0,977.0 C850.8,1007.9 847.8,1039.1 845.0,1070.0 C843.5,1086.9 838.3,1103.3 835.0,1120.0" fill="none" stroke="#2c5f63" stroke-width="1.1"/>
<path d="M547.0,1070.0 C551.3,1076.7 553.4,1085.5 560.0,1090.0 C575.2,1100.3 592.1,1109.1 610.0,1113.0 C642.7,1120.2 676.7,1119.6 710.0,1123.0 C732.3,1125.3 754.6,1130.6 777.0,1130.0 C791.7,1129.6 805.7,1123.3 820.0,1120.0" fill="none" stroke="#2c5f63" stroke-width="1.1"/>
<path d="M273.0,970.0 C276.3,992.3 277.1,1015.2 283.0,1037.0 C286.2,1048.9 295.1,1058.6 300.0,1070.0 C307.5,1087.3 313.7,1105.2 320.0,1123.0 C323.7,1133.5 326.7,1144.3 330.0,1155.0" fill="none" stroke="#2c5f63" stroke-width="1.1"/>
<path d="M300.0,960.0 C302.3,977.7 301.6,996.0 307.0,1013.0 C312.7,1030.9 325.4,1045.8 333.0,1063.0 C338.7,1075.9 343.0,1089.4 347.0,1103.0 C352.0,1120.1 355.7,1137.7 360.0,1155.0" fill="none" stroke="#2c5f63" stroke-width="1.1"/>
<path d="M343.0,900.0 C340.3,920.0 333.9,939.9 335.0,960.0 C336.3,983.8 341.7,1007.6 350.0,1030.0 C357.9,1051.4 374.5,1068.8 383.0,1090.0 C391.3,1110.8 394.3,1133.3 400.0,1155.0" fill="none" stroke="#2c5f63" stroke-width="1.1"/>
<path d="M320.0,895.0 C340.0,886.7 360.0,878.4 380.0,870.0 C403.4,860.1 426.5,849.7 450.0,840.0 C473.2,830.4 496.7,821.3 520.0,812.0" fill="none" stroke="#2c5f63" stroke-width="1.1"/>
<path d="M978.0,509.0 C979.0,483.7 976.9,458.0 981.0,433.0 C982.7,422.7 989.6,413.9 995.0,405.0 C999.6,397.5 1004.2,389.6 1011.0,384.0 C1025.1,372.4 1039.5,359.4 1057.0,354.0 C1070.4,349.9 1085.7,352.6 1099.0,357.0 C1122.3,364.8 1141.6,382.6 1165.0,390.0 C1184.2,396.1 1205.0,394.7 1225.0,397.0" fill="none" stroke="#2c5f63" stroke-width="1.1"/>
<path d="M1108.0,0.0 C1109.0,1.7 1109.4,3.9 1111.0,5.0 C1114.6,7.6 1118.7,9.9 1123.0,11.0 C1127.5,12.1 1132.3,11.5 1137.0,11.5 C1142.0,11.5 1147.0,10.6 1152.0,11.0 C1161.4,11.8 1170.8,12.8 1180.0,15.0 C1188.6,17.1 1196.7,21.0 1205.0,24.0 C1208.7,25.3 1212.1,27.4 1216.0,28.0 C1219.0,28.4 1222.0,27.3 1225.0,27.0" fill="none" stroke="#2c5f63" stroke-width="1.1"/>
<path d="M1082.0,468.0 C1096.3,468.7 1111.1,466.4 1125.0,470.0 C1137.7,473.3 1146.9,486.7 1160.0,488.0 C1181.7,490.2 1203.3,482.7 1225.0,480.0" fill="none" stroke="#2c5f63" stroke-width="1.1"/>
<path d="M1153.7,0.0 L1153.0,63.0 L1148.0,1080.0" fill="none" stroke="#263d3f" stroke-width="1.2"/>
<path d="M0,1023 L410,1027 L820,1029 L1225,1033" fill="none" stroke="#1e3c3e" stroke-width="1.1"/>
<path d="M210.0,0.0 C229.0,12.3 249.8,22.3 267.0,37.0 C280.1,48.2 289.0,63.7 300.0,77.0 C311.0,90.3 321.0,104.5 333.0,117.0 C343.5,127.9 355.4,137.3 367.0,147.0 C375.4,154.0 383.5,161.5 393.0,167.0 C398.1,170.0 404.1,171.3 410.0,172.0 C426.6,174.0 443.4,176.5 460.0,175.0 C477.1,173.5 494.0,169.2 510.0,163.0 C533.2,154.1 554.5,140.7 577.0,130.0 C598.8,119.7 621.3,110.7 643.0,100.0 C660.0,91.6 678.1,84.7 693.0,73.0 C700.1,67.5 704.4,58.6 707.0,50.0 C710.2,39.4 706.6,27.5 710.0,17.0 C712.2,10.2 718.7,5.7 723.0,0.0" fill="none" stroke="#0c3e43" stroke-width="2.1" stroke-linecap="round" stroke-linejoin="round"/>
<path d="M127.0,370.0 C133.0,380.0 137.5,391.0 145.0,400.0 C151.1,407.3 161.4,410.4 167.0,418.0 C177.6,432.4 185.2,448.9 193.0,465.0 C197.2,473.6 200.5,482.7 203.0,492.0 C205.2,500.5 205.7,509.3 207.0,518.0" fill="none" stroke="#0c3e43" stroke-width="2.1" stroke-linecap="round" stroke-linejoin="round"/>
<path d="M127.0,370.0 C142.3,376.0 157.4,382.8 173.0,388.0 C192.7,394.5 212.7,400.6 233.0,405.0 C249.4,408.6 266.2,411.2 283.0,412.0 C299.7,412.8 316.8,414.0 333.0,410.0 C347.5,406.5 360.3,397.9 373.0,390.0 C386.1,381.8 396.1,368.7 410.0,362.0 C431.2,351.8 454.6,347.1 477.0,340.0 C498.9,333.1 521.5,328.2 543.0,320.0 C555.0,315.4 564.8,305.9 577.0,302.0 C583.4,300.0 590.9,300.2 597.0,303.0 C602.8,305.6 606.8,311.5 610.0,317.0 C613.6,323.1 616.3,330.0 617.0,337.0 C618.6,352.9 615.4,369.1 617.0,385.0 C618.7,401.9 622.3,418.7 627.0,435.0 C629.0,442.2 633.7,448.3 637.0,455.0" fill="none" stroke="#0c3e43" stroke-width="2.1" stroke-linecap="round" stroke-linejoin="round"/>
<path d="M538.0,788.0 C539.7,782.0 541.5,776.0 543.0,770.0 C547.8,750.7 552.7,731.4 557.0,712.0 C560.7,695.4 563.0,678.5 567.0,662.0 C570.6,647.1 577.8,633.1 580.0,618.0 C581.6,607.1 578.0,596.0 578.0,585.0 C578.0,571.7 576.0,557.7 580.0,545.0 C584.6,530.3 594.8,518.0 603.0,505.0 C613.8,488.0 626.4,472.2 637.0,455.0 C651.1,432.1 661.0,406.6 677.0,385.0 C697.8,357.0 717.6,325.9 747.0,307.0 C767.8,293.6 796.2,300.0 820.0,293.0 C841.5,286.6 862.0,277.0 882.0,267.0 C899.4,258.3 916.4,248.6 932.0,237.0 C949.8,223.8 966.3,208.7 982.0,193.0 C996.4,178.6 1010.0,163.4 1022.0,147.0 C1034.4,130.0 1044.9,111.5 1055.0,93.0 C1060.2,83.4 1063.7,73.0 1068.0,63.0" fill="none" stroke="#0c3e43" stroke-width="2.1" stroke-linecap="round" stroke-linejoin="round"/>
<path d="M763.0,0.0 C765.3,6.7 769.4,13.0 770.0,20.0 C771.8,40.9 768.2,62.1 770.0,83.0 C770.6,90.0 772.5,97.6 777.0,103.0 C789.5,118.0 807.7,127.8 820.0,143.0 C829.6,154.8 834.5,169.8 842.0,183.0 C848.5,194.4 856.1,205.2 862.0,217.0 C869.5,232.0 875.3,247.7 882.0,263.0" fill="none" stroke="#0c3e43" stroke-width="2.1" stroke-linecap="round" stroke-linejoin="round"/>
<path d="M1058.0,100.0 C1066.0,111.0 1075.4,121.1 1082.0,133.0 C1090.2,147.9 1097.5,163.6 1102.0,180.0 C1105.3,191.9 1105.0,204.6 1105.0,217.0 C1105.0,239.0 1105.2,261.2 1102.0,283.0 C1099.5,300.1 1093.9,316.7 1088.0,333.0 C1081.5,350.8 1074.3,368.5 1065.0,385.0 C1049.9,411.6 1028.7,434.6 1015.0,462.0 C1005.1,481.7 1001.5,503.9 995.0,525.0 C987.1,550.6 978.2,575.9 972.0,602.0 C968.1,618.4 966.3,635.2 965.0,652.0 C963.9,666.3 966.9,680.8 965.0,695.0 C963.6,705.4 959.8,715.6 955.0,725.0 C949.7,735.2 941.7,743.7 935.0,753.0" fill="none" stroke="#0c3e43" stroke-width="2.1" stroke-linecap="round" stroke-linejoin="round"/>
<path d="M748.0,692.0 C751.0,691.3 754.5,688.3 757.0,690.0 C765.2,695.6 770.8,704.2 777.0,712.0 C786.2,723.6 788.7,744.3 803.0,748.0 C845.6,759.1 891.0,751.3 935.0,753.0" fill="none" stroke="#0c3e43" stroke-width="2.1" stroke-linecap="round" stroke-linejoin="round"/>
<path d="M935.0,753.0 C942.7,758.7 951.1,763.5 958.0,770.0 C968.8,780.2 980.3,790.3 988.0,803.0 C995.3,815.1 997.0,829.8 1002.0,843.0 C1016.0,879.8 1034.8,915.0 1045.0,953.0 C1049.3,969.1 1047.1,986.5 1045.0,1003.0 C1042.8,1020.1 1039.3,1037.4 1032.0,1053.0 C1023.4,1071.2 1011.7,1088.2 998.0,1103.0 C980.1,1122.5 958.0,1137.7 938.0,1155.0" fill="none" stroke="#0c3e43" stroke-width="2.1" stroke-linecap="round" stroke-linejoin="round"/>
<path d="M560.0,778.0 C565.7,775.3 571.2,772.4 577.0,770.0 C607.9,757.1 639.5,745.9 670.0,732.0 C696.6,719.9 722.0,705.3 748.0,692.0" fill="none" stroke="#0c3e43" stroke-width="2.1" stroke-linecap="round" stroke-linejoin="round"/>
<path d="M803.0,748.0 C802.0,755.3 801.3,762.7 800.0,770.0 C797.0,786.7 794.1,803.5 790.0,820.0 C785.0,840.2 780.2,860.5 773.0,880.0 C769.1,890.6 763.9,901.0 757.0,910.0 C748.4,921.2 739.2,932.9 727.0,940.0 C713.8,947.7 698.1,950.3 683.0,953.0 C664.6,956.3 645.5,955.0 627.0,958.0 C604.4,961.7 581.5,965.2 560.0,973.0 C545.4,978.3 531.0,986.0 520.0,997.0 C511.3,1005.7 505.8,1017.9 503.0,1030.0 C500.0,1043.0 500.0,1057.0 503.0,1070.0 C505.8,1082.1 512.9,1092.9 520.0,1103.0 C528.7,1115.4 539.5,1126.1 550.0,1137.0 C556.2,1143.5 563.3,1149.0 570.0,1155.0" fill="none" stroke="#0c3e43" stroke-width="2.1" stroke-linecap="round" stroke-linejoin="round"/>
<path d="M777.0,770.0 L803.0,748.0" fill="none" stroke="#0c3e43" stroke-width="2.1" stroke-linecap="round" stroke-linejoin="round"/>
<path d="M60.0,700.0 C60.0,681.7 55.0,662.7 60.0,645.0 C63.2,633.6 74.5,626.2 83.0,618.0 C98.9,602.8 115.6,588.5 133.0,575.0 C157.0,556.4 182.3,539.7 207.0,522.0" fill="none" stroke="#0c3e43" stroke-width="2.1" stroke-linecap="round" stroke-linejoin="round"/>
<path d="M410.0,842.0 C432.3,831.3 454.1,819.5 477.0,810.0 C497.5,801.5 519.6,796.8 540.0,788.0 C550.7,783.4 560.0,776.0 570.0,770.0" fill="none" stroke="#0c3e43" stroke-width="2.1" stroke-linecap="round" stroke-linejoin="round"/>
<path d="M1144.0,15.0 C1147.7,13.3 1151.5,12.1 1155.0,10.0 C1159.9,7.0 1164.3,3.3 1169.0,0.0" fill="none" stroke="#0c3e43" stroke-width="2.1" stroke-linecap="round" stroke-linejoin="round"/>
<path d="M1208.0,23.0 L1225.0,15.0" fill="none" stroke="#0c3e43" stroke-width="2.1" stroke-linecap="round" stroke-linejoin="round"/>
<path d="M393.0,5.0 C373.0,29.0 353.2,53.1 333.0,77.0 C318.8,93.8 305.5,111.5 290.0,127.0 C278.8,138.2 264.5,146.1 253.0,157.0 C238.8,170.5 226.0,185.4 213.0,200.0 C199.3,215.4 185.5,230.6 173.0,247.0 C169.4,251.7 165.7,257.1 165.0,263.0 C163.6,275.3 165.8,287.7 167.0,300.0 C168.4,314.4 170.8,328.7 173.0,343.0 C175.1,357.0 179.2,370.8 180.0,385.0 C180.6,396.0 178.6,407.1 177.0,418.0 C176.3,422.8 174.3,427.3 173.0,432.0" fill="none" stroke="#0c3e43" stroke-width="2.1" stroke-dasharray="13 4"/>
<path d="M207.0,522.0 C221.3,518.7 235.9,516.3 250.0,512.0 C272.7,505.0 296.4,499.8 317.0,488.0 C350.3,468.9 379.6,443.5 410.0,420.0 C424.0,409.2 436.4,396.3 450.0,385.0 C469.7,368.6 490.0,353.0 510.0,337.0" fill="none" stroke="#0c3e43" stroke-width="2.1" stroke-dasharray="13 4"/>
<path d="M812.0,295.0 C802.3,310.0 791.9,324.5 783.0,340.0 C774.5,354.9 767.3,370.5 760.0,386.0 C755.7,395.2 748.4,403.9 748.0,414.0 C744.4,506.6 748.0,599.3 748.0,692.0" fill="none" stroke="#0c3e43" stroke-width="2.1" stroke-dasharray="13 4"/>
<path d="M1058.0,100.0 C1061.3,99.0 1064.7,96.0 1068.0,97.0 C1073.5,98.6 1077.8,103.1 1082.0,107.0 C1104.6,128.4 1126.8,150.2 1148.0,173.0 C1158.8,184.6 1171.7,195.4 1178.0,210.0 C1182.3,220.1 1176.5,232.1 1178.0,243.0 C1179.9,256.6 1183.8,269.9 1188.0,283.0 C1192.8,298.0 1201.7,311.6 1205.0,327.0 C1209.1,346.0 1209.5,365.6 1210.0,385.0 C1210.5,406.0 1206.7,427.0 1208.0,448.0 C1208.4,454.1 1211.0,460.3 1215.0,465.0 C1217.3,467.7 1221.7,467.0 1225.0,468.0" fill="none" stroke="#0c3e43" stroke-width="2.1" stroke-dasharray="13 4"/>
<path d="M1068.0,375.0 C1072.7,378.3 1076.9,382.4 1082.0,385.0 C1103.6,395.8 1126.4,404.2 1148.0,415.0 C1168.4,425.2 1188.0,437.0 1208.0,448.0" fill="none" stroke="#0c3e43" stroke-width="2.1" stroke-dasharray="13 4"/>
<path d="M995.0,545.0 C999.3,552.7 1001.9,561.7 1008.0,568.0 C1014.6,574.8 1023.0,580.1 1032.0,583.0 C1048.1,588.2 1065.2,590.3 1082.0,592.0 C1103.9,594.3 1126.0,595.0 1148.0,595.0 C1159.4,595.0 1170.6,592.0 1182.0,592.0 C1196.4,592.0 1210.7,594.0 1225.0,595.0" fill="none" stroke="#0c3e43" stroke-width="2.1" stroke-dasharray="13 4"/>
<path d="M1172.0,595.0 C1170.7,625.0 1168.9,655.0 1168.0,685.0 C1167.6,699.3 1169.0,713.7 1168.0,728.0 C1167.0,742.1 1164.4,756.1 1162.0,770.0 C1159.1,786.7 1154.4,803.2 1152.0,820.0 C1149.7,836.6 1152.2,853.8 1148.0,870.0 C1145.4,880.1 1139.9,890.1 1132.0,897.0 C1111.7,914.9 1087.8,928.3 1065.0,943.0 C1058.7,947.0 1051.7,949.7 1045.0,953.0" fill="none" stroke="#0c3e43" stroke-width="2.1" stroke-dasharray="13 4"/>
<path d="M505.0,908.0 C523.3,899.7 541.2,890.2 560.0,883.0 C587.3,872.5 615.9,865.8 643.0,855.0 C660.3,848.1 676.8,839.2 693.0,830.0 C704.9,823.2 715.9,815.0 727.0,807.0 C735.9,800.6 744.3,793.7 753.0,787.0" fill="none" stroke="#0c3e43" stroke-width="2.1" stroke-dasharray="13 4"/>
<path d="M405.0,855.0 C392.3,882.3 373.9,907.7 367.0,937.0 C361.9,958.4 365.2,981.5 370.0,1003.0 C374.0,1020.9 385.3,1036.3 393.0,1053.0 C398.7,1065.3 404.9,1077.4 410.0,1090.0 C413.9,1099.8 417.3,1109.8 420.0,1120.0 C423.0,1131.5 424.7,1143.3 427.0,1155.0" fill="none" stroke="#0c3e43" stroke-width="2.1" stroke-dasharray="13 4"/>
<path d="M0.0,47.0 L53.0,45.0" fill="none" stroke="#0c3e43" stroke-width="2.1" stroke-dasharray="13 4"/>
<path d="M111.0,40.0 C123.3,35.0 136.3,31.4 148.0,25.0 C160.8,18.0 172.0,8.3 184.0,0.0" fill="none" stroke="#0c3e43" stroke-width="2.1" stroke-dasharray="13 4"/>
<path d="M393.0,582.0 C409.7,577.0 426.3,572.0 443.0,567.0 C453.0,564.0 462.6,558.0 473.0,558.0 C478.5,558.0 482.3,564.0 487.0,567.0 C494.7,572.0 503.5,575.6 510.0,582.0 C522.3,594.1 534.9,606.7 543.0,622.0 C552.9,640.6 556.3,662.0 563.0,682.0" fill="none" stroke="#0c3e43" stroke-width="2.1" stroke-dasharray="13 4"/>
<path d="M127.0,370.0 C134.7,368.3 142.8,368.2 150.0,365.0 C155.8,362.4 160.5,357.5 165.0,353.0 C168.9,349.1 171.7,344.3 175.0,340.0" fill="none" stroke="#0c3e43" stroke-width="2.1" stroke-dasharray="13 4"/>
<path d="M90.0,118.0 L207.0,0.0" fill="none" stroke="#efe4a8" stroke-width="1.6" stroke-linejoin="round"/>
<path d="M213.0,200.0 L230.0,195.0 L247.0,197.0 L263.0,213.0 L293.0,250.0 L303.0,267.0 L305.0,320.0 L293.0,385.0 L267.0,418.0 L233.0,452.0 L190.0,475.0" fill="none" stroke="#efe4a8" stroke-width="1.6" stroke-linejoin="round"/>
<path d="M140.0,400.0 L149.0,384.0 L166.0,400.0 L180.0,408.0 L193.0,425.0 L197.0,452.0 L190.0,475.0 L170.0,498.0 L150.0,522.0 L143.0,545.0 L147.0,592.0 L140.0,612.0 L127.0,632.0 L97.0,665.0 L67.0,682.0" fill="none" stroke="#efe4a8" stroke-width="1.6" stroke-linejoin="round"/>
<path d="M149.0,384.0 L145.0,435.0 L127.0,458.0 L85.0,502.0" fill="none" stroke="#efe4a8" stroke-width="1.6" stroke-linejoin="round"/>
<path d="M170.0,500.0 L183.0,502.0 L200.0,512.0 L207.0,525.0 L210.0,552.0 L203.0,605.0" fill="none" stroke="#efe4a8" stroke-width="1.6" stroke-linejoin="round"/>
<path d="M72.0,535.0 L100.0,533.0 L117.0,538.0 L133.0,548.0 L143.0,565.0 L147.0,592.0 L150.0,602.0 L177.0,605.0 L203.0,603.0" fill="none" stroke="#efe4a8" stroke-width="1.6" stroke-linejoin="round"/>
<path d="M160.0,163.0 L173.0,143.0 L200.0,127.0 L237.0,107.0 L277.0,98.0 L340.0,83.0 L377.0,63.0 L410.0,32.0 L443.0,0.0" fill="none" stroke="#efe4a8" stroke-width="1.6" stroke-linejoin="round"/>
<path d="M277.0,98.0 L300.0,117.0 L320.0,173.0 L325.0,250.0 L332.0,262.0 L342.0,262.0 L363.0,253.0 L410.0,217.0 L490.0,193.0 L523.0,173.0 L530.0,167.0 L532.0,123.0" fill="none" stroke="#efe4a8" stroke-width="1.6" stroke-linejoin="round"/>
<path d="M610.0,70.0 L620.0,80.0 L623.0,97.0 L617.0,113.0 L597.0,127.0 L570.0,140.0 L553.0,142.0 L540.0,133.0 L532.0,123.0 L537.0,103.0 L553.0,87.0 L577.0,75.0 L610.0,70.0" fill="none" stroke="#efe4a8" stroke-width="1.6" stroke-linejoin="round"/>
<path d="M627.0,47.0 L610.0,70.0" fill="none" stroke="#efe4a8" stroke-width="1.6" stroke-linejoin="round"/>
<path d="M523.0,173.0 L535.0,183.0 L537.0,203.0 L530.0,227.0 L510.0,240.0 L470.0,260.0 L430.0,277.0 L410.0,282.0 L347.0,300.0 L323.0,320.0 L322.0,333.0 L330.0,347.0 L358.0,357.0 L383.0,385.0 L410.0,395.0 L430.0,408.0 L460.0,435.0 L500.0,460.0 L543.0,432.0 L610.0,385.0 L623.0,367.0 L650.0,333.0 L677.0,307.0 L740.0,274.0 L784.0,250.0 L816.0,220.0 L829.0,199.0 L842.0,183.0 L851.0,175.0 L877.0,155.0" fill="none" stroke="#efe4a8" stroke-width="1.6" stroke-linejoin="round"/>
<path d="M948.0,103.0 L925.0,110.0 L905.0,130.0 L877.0,157.0 L880.0,173.0 L902.0,172.0 L932.0,143.0 L948.0,117.0 L948.0,103.0" fill="none" stroke="#efe4a8" stroke-width="1.6" stroke-linejoin="round"/>
<path d="M740.0,50.0 L760.0,45.0 L777.0,50.0 L780.0,67.0 L770.0,83.0 L747.0,90.0 L738.0,83.0 L740.0,50.0" fill="none" stroke="#efe4a8" stroke-width="1.6" stroke-linejoin="round"/>
<path d="M738.0,83.0 L743.0,110.0 L748.0,120.0 L757.0,145.0 L769.0,168.0 L782.0,184.0 L794.0,193.0 L815.0,201.0 L829.0,199.0" fill="none" stroke="#efe4a8" stroke-width="1.6" stroke-linejoin="round"/>
<path d="M780.0,0.0 L763.0,17.0 L747.0,40.0 L740.0,50.0" fill="none" stroke="#efe4a8" stroke-width="1.6" stroke-linejoin="round"/>
<path d="M740.0,274.0 L728.0,293.0 L728.0,301.0 L740.0,322.0 L756.0,330.0 L783.0,332.0 L812.0,297.0 L824.0,294.0 L834.0,299.0 L849.0,328.0 L869.0,367.0 L882.0,392.0" fill="none" stroke="#efe4a8" stroke-width="1.6" stroke-linejoin="round"/>
<path d="M783.0,332.0 L777.0,349.0 L779.0,365.0 L806.0,382.0 L834.0,404.0 L845.0,423.0 L865.0,437.0" fill="none" stroke="#efe4a8" stroke-width="1.6" stroke-linejoin="round"/>
<path d="M756.0,330.0 L732.0,351.0 L719.0,386.0 L717.0,414.0" fill="none" stroke="#efe4a8" stroke-width="1.6" stroke-linejoin="round"/>
<path d="M848.0,293.0 L858.0,287.0 L878.0,297.0 L888.0,313.0 L895.0,340.0 L892.0,350.0 L882.0,350.0 L858.0,323.0 L848.0,293.0" fill="none" stroke="#efe4a8" stroke-width="1.6" stroke-linejoin="round"/>
<path d="M915.0,0.0 L925.0,13.0 L948.0,67.0 L955.0,90.0 L968.0,97.0 L988.0,88.0 L993.0,70.0 L978.0,20.0 L968.0,0.0" fill="none" stroke="#efe4a8" stroke-width="1.6" stroke-linejoin="round"/>
<path d="M955.0,90.0 L947.0,102.0 L948.0,103.0" fill="none" stroke="#efe4a8" stroke-width="1.6" stroke-linejoin="round"/>
<path d="M948.0,118.0 L988.0,133.0 L1005.0,150.0 L1025.0,193.0 L1035.0,233.0 L1045.0,287.0 L1038.0,333.0 L1022.0,385.0 L995.0,405.0 L988.0,417.0" fill="none" stroke="#efe4a8" stroke-width="1.6" stroke-linejoin="round"/>
<path d="M1048.0,130.0 L1062.0,130.0 L1075.0,150.0 L1080.0,170.0 L1075.0,187.0 L1062.0,207.0 L1045.0,222.0 L1032.0,220.0 L1025.0,193.0 L1028.0,163.0 L1048.0,130.0" fill="none" stroke="#efe4a8" stroke-width="1.6" stroke-linejoin="round"/>
<path d="M1062.0,130.0 L1055.0,110.0 L1055.0,93.0 L1075.0,63.0" fill="none" stroke="#efe4a8" stroke-width="1.6" stroke-linejoin="round"/>
<path d="M1080.0,170.0 L1095.0,193.0 L1102.0,233.0 L1088.0,300.0 L1078.0,367.0 L1075.0,385.0 L1075.0,402.0 L1082.0,417.0 L1095.0,427.0 L1132.0,428.0 L1155.0,445.0 L1185.0,482.0 L1225.0,495.0" fill="none" stroke="#efe4a8" stroke-width="1.6" stroke-linejoin="round"/>
<path d="M1005.0,425.0 L1015.0,415.0 L1032.0,412.0 L1058.0,422.0 L1092.0,427.0" fill="none" stroke="#efe4a8" stroke-width="1.6" stroke-linejoin="round"/>
<path d="M1103.0,0.0 L1111.0,7.0 L1127.0,15.0 L1170.0,22.0 L1208.0,28.6 L1225.0,27.6" fill="none" stroke="#efe4a8" stroke-width="1.6" stroke-linejoin="round"/>
<path d="M882.0,392.0 L905.0,417.0 L932.0,430.0 L958.0,430.0 L988.0,417.0 L1005.0,425.0 L1012.0,442.0 L1008.0,492.0 L995.0,552.0 L982.0,592.0 L965.0,625.0 L945.0,640.0 L918.0,632.0 L892.0,624.0 L872.0,642.0 L862.0,662.0 L865.0,672.0" fill="none" stroke="#efe4a8" stroke-width="1.6" stroke-linejoin="round"/>
<path d="M882.0,392.0 L865.0,405.0 L862.0,435.0 L875.0,445.0 L880.0,472.0 L875.0,492.0 L848.0,538.0 L815.0,602.0" fill="none" stroke="#efe4a8" stroke-width="1.6" stroke-linejoin="round"/>
<path d="M1012.0,448.0 L1065.0,475.0 L1105.0,505.0 L1135.0,535.0 L1155.0,572.0 L1175.0,605.0 L1188.0,642.0 L1222.0,692.0" fill="none" stroke="#efe4a8" stroke-width="1.6" stroke-linejoin="round"/>
<path d="M1008.0,492.0 L1022.0,522.0 L1048.0,558.0 L1072.0,618.0 L1082.0,665.0 L1105.0,718.0 L1122.0,770.0 L1130.0,788.0" fill="none" stroke="#efe4a8" stroke-width="1.6" stroke-linejoin="round"/>
<path d="M1188.0,642.0 L1208.0,647.0 L1225.0,642.0" fill="none" stroke="#efe4a8" stroke-width="1.6" stroke-linejoin="round"/>
<path d="M815.0,672.0 L862.0,670.0 L870.0,678.0 L872.0,692.0 L862.0,702.0 L852.0,705.0 L835.0,702.0 L815.0,697.0" fill="none" stroke="#efe4a8" stroke-width="1.6" stroke-linejoin="round"/>
<path d="M872.0,692.0 L875.0,718.0 L865.0,738.0 L815.0,748.0" fill="none" stroke="#efe4a8" stroke-width="1.6" stroke-linejoin="round"/>
<path d="M965.0,685.0 L1002.0,695.0 L1025.0,688.0 L1045.0,692.0 L1060.0,715.0 L1060.0,732.0 L1048.0,742.0 L1015.0,747.0 L985.0,770.0 L965.0,772.0 L958.0,765.0 L943.0,738.0 L938.0,715.0 L945.0,692.0 L965.0,685.0" fill="none" stroke="#efe4a8" stroke-width="1.6" stroke-linejoin="round"/>
<path d="M452.0,405.0 L467.0,373.0 L493.0,360.0 L510.0,363.0 L513.0,373.0 L507.0,385.0 L487.0,408.0 L463.0,417.0 L452.0,405.0" fill="none" stroke="#efe4a8" stroke-width="1.6" stroke-linejoin="round"/>
<path d="M477.0,568.0 L503.0,542.0 L523.0,533.0 L532.0,542.0 L528.0,578.0 L517.0,602.0 L507.0,607.0 L497.0,602.0 L478.0,575.0 L477.0,568.0" fill="none" stroke="#efe4a8" stroke-width="1.6" stroke-linejoin="round"/>
<path d="M687.0,405.0 L703.0,400.0 L717.0,412.0 L722.0,483.0 L710.0,493.0 L690.0,493.0 L665.0,483.0 L673.0,452.0 L680.0,418.0 L687.0,405.0" fill="none" stroke="#efe4a8" stroke-width="1.6" stroke-linejoin="round"/>
<path d="M665.0,483.0 L643.0,512.0 L610.0,572.0 L603.0,605.0 L610.0,628.0 L627.0,652.0 L643.0,650.0 L663.0,638.0 L687.0,615.0 L710.0,585.0 L730.0,575.0 L747.0,558.0 L753.0,528.0 L747.0,512.0 L722.0,483.0" fill="none" stroke="#efe4a8" stroke-width="1.6" stroke-linejoin="round"/>
<path d="M717.0,412.0 L743.0,442.0 L756.0,453.0 L787.0,458.0 L800.0,456.0 L838.0,447.0 L847.0,451.0 L849.0,462.0 L834.0,491.0 L812.0,519.0 L795.0,558.0 L793.0,573.0 L812.0,604.0 L816.0,624.0 L830.0,643.0 L849.0,649.0 L869.0,647.0" fill="none" stroke="#efe4a8" stroke-width="1.6" stroke-linejoin="round"/>
<path d="M800.0,456.0 L802.0,447.0 L818.0,433.0 L838.0,425.0 L847.0,425.0 L857.0,433.0 L865.0,437.0" fill="none" stroke="#efe4a8" stroke-width="1.6" stroke-linejoin="round"/>
<path d="M568.0,754.0 L597.0,718.0 L623.0,710.0 L660.0,705.0 L690.0,692.0 L723.0,683.0 L735.0,688.0 L735.0,698.0 L710.0,712.0 L680.0,728.0 L662.0,749.0 L641.0,773.0 L599.0,783.0 L573.0,772.0 L568.0,754.0" fill="none" stroke="#efe4a8" stroke-width="1.6" stroke-linejoin="round"/>
<path d="M750.0,678.0 L777.0,675.0 L815.0,672.0" fill="none" stroke="#efe4a8" stroke-width="1.6" stroke-linejoin="round"/>
<path d="M747.0,688.0 L815.0,697.0" fill="none" stroke="#efe4a8" stroke-width="1.6" stroke-linejoin="round"/>
<path d="M815.0,748.0 L790.0,758.0 L777.0,770.0" fill="none" stroke="#efe4a8" stroke-width="1.6" stroke-linejoin="round"/>
<path d="M300.0,902.0 L320.0,900.0 L337.0,913.0 L343.0,940.0 L340.0,970.0 L327.0,997.0 L310.0,1015.0 L290.0,1022.0 L270.0,1033.0 L265.0,1042.0" fill="none" stroke="#efe4a8" stroke-width="1.6" stroke-linejoin="round"/>
<path d="M310.0,1057.0 L325.0,1060.0 L340.0,1095.0 L333.0,1113.0 L313.0,1120.0 L297.0,1110.0 L292.0,1090.0 L297.0,1067.0 L310.0,1057.0" fill="none" stroke="#efe4a8" stroke-width="1.6" stroke-linejoin="round"/>
<path d="M533.0,770.0 L530.0,790.0 L507.0,813.0 L463.0,833.0 L410.0,850.0" fill="none" stroke="#efe4a8" stroke-width="1.6" stroke-linejoin="round"/>
<path d="M573.0,770.0 L587.0,782.0 L603.0,785.0 L643.0,770.0" fill="none" stroke="#efe4a8" stroke-width="1.6" stroke-linejoin="round"/>
<path d="M410.0,845.0 L440.0,860.0 L463.0,880.0 L485.0,907.0" fill="none" stroke="#efe4a8" stroke-width="1.6" stroke-linejoin="round"/>
<path d="M485.0,907.0 L527.0,888.0 L537.0,890.0 L542.0,897.0 L520.0,930.0 L503.0,960.0 L497.0,987.0 L477.0,1010.0 L443.0,1020.0 L410.0,1017.0 L405.0,1013.0 L402.0,997.0 L410.0,977.0 L443.0,937.0 L485.0,907.0" fill="none" stroke="#efe4a8" stroke-width="1.6" stroke-linejoin="round"/>
<path d="M500.0,973.0 L580.0,947.0 L600.0,933.0 L617.0,910.0 L630.0,860.0 L650.0,817.0 L687.0,802.0 L730.0,793.0 L777.0,770.0" fill="none" stroke="#efe4a8" stroke-width="1.6" stroke-linejoin="round"/>
<path d="M698.0,887.0 L703.0,867.0 L725.0,851.0 L773.0,851.0 L763.0,897.0 L747.0,913.0 L733.0,921.0 L713.0,915.0 L700.0,900.0 L698.0,887.0" fill="none" stroke="#efe4a8" stroke-width="1.6" stroke-linejoin="round"/>
<path d="M773.0,851.0 L793.0,803.0 L810.0,770.0" fill="none" stroke="#efe4a8" stroke-width="1.6" stroke-linejoin="round"/>
<path d="M698.0,887.0 L643.0,943.0 L577.0,1010.0 L543.0,1040.0 L538.0,1053.0 L547.0,1073.0 L587.0,1100.0 L627.0,1123.0 L677.0,1155.0" fill="none" stroke="#efe4a8" stroke-width="1.6" stroke-linejoin="round"/>
<path d="M633.0,958.0 L653.0,953.0 L703.0,957.0 L705.0,977.0 L697.0,987.0 L670.0,995.0 L643.0,992.0 L632.0,980.0 L633.0,958.0" fill="none" stroke="#efe4a8" stroke-width="1.6" stroke-linejoin="round"/>
<path d="M440.0,1155.0 L440.0,1140.0 L453.0,1128.0 L488.0,1115.0 L510.0,1117.0 L528.0,1130.0 L530.0,1147.0 L527.0,1155.0" fill="none" stroke="#efe4a8" stroke-width="1.6" stroke-linejoin="round"/>
<path d="M527.0,1127.0 L577.0,1153.0" fill="none" stroke="#efe4a8" stroke-width="1.6" stroke-linejoin="round"/>
<path d="M898.0,857.0 L915.0,858.0 L933.0,867.0 L940.0,887.0 L940.0,917.0 L932.0,950.0 L922.0,980.0 L905.0,992.0 L890.0,997.0 L868.0,992.0 L853.0,980.0 L850.0,963.0 L865.0,923.0 L878.0,870.0 L898.0,857.0" fill="none" stroke="#efe4a8" stroke-width="1.6" stroke-linejoin="round"/>
<path d="M1088.0,787.0 L1112.0,779.0 L1122.0,782.0 L1130.0,788.0 L1155.0,810.0 L1155.0,828.0 L1138.0,840.0 L1112.0,853.0 L1088.0,880.0 L1072.0,910.0 L1042.0,943.0 L1018.0,955.0 L1005.0,940.0 L998.0,917.0 L1005.0,887.0 L1022.0,863.0 L1062.0,837.0 L1082.0,810.0 L1088.0,787.0" fill="none" stroke="#efe4a8" stroke-width="1.6" stroke-linejoin="round"/>
<path d="M1005.0,940.0 L988.0,957.0 L988.0,987.0 L1005.0,1020.0 L1015.0,1053.0 L1002.0,1077.0 L965.0,1117.0 L925.0,1130.0 L868.0,1148.0 L815.0,1153.0" fill="none" stroke="#efe4a8" stroke-width="1.6" stroke-linejoin="round"/>
<rect x="1000.5" y="453.5" width="11" height="13" fill="#0c3e43" transform="rotate(15 1006 460)"/>
<g font-family="Liberation Sans" font-size="16" fill="#efe4a8" text-anchor="middle">
<text x="281" y="32">7S</text>
<text x="222" y="338">7S</text>
<text x="578" y="111">26</text>
<text x="648" y="217">7S</text>
<text x="759" y="70">26</text>
<text x="860" y="71">7S</text>
<text x="913" y="144">27</text>
<text x="1050" y="180">26</text>
<text x="1155" y="132">7b</text>
<text x="1071" y="255">7S</text>
<text x="950" y="250">7b</text>
<text x="872" y="323">7a(6)</text>
<text x="828" y="365">29(46t)</text>
<text x="158" y="476">7S</text>
<text x="178" y="560">7S</text>
<text x="90" y="607">1</text>
<text x="150" y="656">7a(6)</text>
<text x="337" y="422">7a(6)</text>
<text x="483" y="392">7a(6)</text>
<text x="576" y="491">7a(6)</text>
<text x="696" y="457">7a(6)</text>
<text x="764" y="414">7a(6)</text>
<text x="697" y="543">7*</text>
<text x="507" y="575">7S</text>
<text x="625" y="745">7S</text>
<text x="847" y="506">7b</text>
<text x="919" y="555">29</text>
<text x="1134" y="652">7S</text>
<text x="835" y="692">26</text>
<text x="981" y="732">29(46t)</text>
<text x="1220" y="570">26</text>
<text x="283" y="989">7a</text>
<text x="314" y="1094">6</text>
<text x="401" y="1083">7a(6)</text>
<text x="484" y="816">7a</text>
<text x="460" y="983">7*</text>
<text x="735" y="886">7*</text>
<text x="667" y="977">7b</text>
<text x="770" y="1065">7b</text>
<text x="484" y="1152">7S</text>
<text x="906" y="918">7*</text>
<text x="1039" y="900">26</text>
<text x="936" y="5">26</text>
</g>
<text x="55" y="52" font-family="Liberation Sans" font-style="italic" font-size="23" fill="#0c4246" stroke="#578a8c" stroke-width="3" paint-order="stroke" textLength="105" lengthAdjust="spacingAndGlyphs">Rütjosteli</text>
<text x="335" y="214" font-family="Liberation Sans" font-style="italic" font-size="23" fill="#0c4246" stroke="#578a8c" stroke-width="3" paint-order="stroke" textLength="187" lengthAdjust="spacingAndGlyphs">Hinderbergwald</text>
<text x="955" y="311" font-family="Liberation Sans" font-style="italic" font-size="23" fill="#0c4246" stroke="#578a8c" stroke-width="3" paint-order="stroke" textLength="137" lengthAdjust="spacingAndGlyphs">Mertelmoos</text>
<text x="923" y="831" font-family="Liberation Sans" font-style="italic" font-size="23" fill="#0c4246" stroke="#578a8c" stroke-width="3" paint-order="stroke" textLength="185" lengthAdjust="spacingAndGlyphs">Buechberigwald</text>
<text x="647" y="1064" font-family="Liberation Sans" font-style="italic" font-size="23" fill="#0c4246" stroke="#578a8c" stroke-width="3" paint-order="stroke" textLength="103" lengthAdjust="spacingAndGlyphs">Säuräche</text>
<text x="455" y="743" font-family="Liberation Sans" font-style="italic" font-size="23" fill="#111" stroke="#eeeeee" stroke-width="3" paint-order="stroke" textLength="57" lengthAdjust="spacingAndGlyphs">Weid</text>
<text x="38" y="782" font-family="Liberation Sans" font-style="italic" font-size="23" fill="#111" stroke="#eeeeee" stroke-width="3" paint-order="stroke" textLength="114" lengthAdjust="spacingAndGlyphs">Hinterfeld</text>
<text x="1142" y="1103" font-family="Liberation Sans" font-style="italic" font-size="23" fill="#111">Bu</text><text x="1199" y="1103" font-family="Liberation Sans" font-style="italic" font-size="23" fill="#111">eb</text>
<text x="0" y="193" font-family="Liberation Sans" font-style="italic" font-size="23" fill="#0c4246" stroke="#578a8c" stroke-width="3" paint-order="stroke" textLength="10" lengthAdjust="spacingAndGlyphs">d</text>
<text x="0" y="950" font-family="Liberation Sans" font-style="italic" font-size="23" fill="#111" stroke="#eeeeee" stroke-width="3" paint-order="stroke" textLength="10" lengthAdjust="spacingAndGlyphs">d</text>
<text x="885" y="252" font-family="Liberation Sans" font-style="normal" font-size="22" fill="#0c4246" stroke="#578a8c" stroke-width="3" paint-order="stroke" textLength="38" lengthAdjust="spacingAndGlyphs">635</text>
<text x="128" y="355" font-family="Liberation Sans" font-style="normal" font-size="22" fill="#0c4246" stroke="#578a8c" stroke-width="3" paint-order="stroke" textLength="37" lengthAdjust="spacingAndGlyphs">623</text>
<text x="398" y="570" font-family="Liberation Sans" font-style="normal" font-size="22" fill="#111" stroke="#eeeeee" stroke-width="3" paint-order="stroke" textLength="37" lengthAdjust="spacingAndGlyphs">594</text>
<text x="208" y="1048" font-family="Liberation Sans" font-style="normal" font-size="22" fill="#111" stroke="#eeeeee" stroke-width="3" paint-order="stroke" textLength="37" lengthAdjust="spacingAndGlyphs">564</text>
<text x="703" y="1013" font-family="Liberation Sans" font-style="normal" font-size="22" fill="#0c4246" stroke="#578a8c" stroke-width="3" paint-order="stroke" textLength="39" lengthAdjust="spacingAndGlyphs">646</text>
<text x="0" y="0" font-family="Liberation Sans" font-size="20" fill="#555" transform="translate(482,466) rotate(-62)">600</text>
<text x="583" y="355" font-family="Liberation Sans" font-size="24" fill="#0c4246" text-anchor="middle" transform="rotate(-62 583 355)">B</text>
<text x="612" y="325" font-family="Liberation Sans" font-size="24" fill="#0c4246" text-anchor="middle" transform="rotate(-62 612 325)">a</text>
<text x="637" y="293" font-family="Liberation Sans" font-size="24" fill="#0c4246" text-anchor="middle" transform="rotate(-62 637 293)">b</text>
<text x="660" y="257" font-family="Liberation Sans" font-size="24" fill="#0c4246" text-anchor="middle" transform="rotate(-62 660 257)">e</text>
<text x="683" y="233" font-family="Liberation Sans" font-size="24" fill="#0c4246" text-anchor="middle" transform="rotate(-62 683 233)">l</text>
<text x="697" y="193" font-family="Liberation Sans" font-size="24" fill="#0c4246" text-anchor="middle" transform="rotate(-62 697 193)">l</text>
<text x="707" y="165" font-family="Liberation Sans" font-size="24" fill="#0c4246" text-anchor="middle" transform="rotate(-62 707 165)">l</text>
<text x="722" y="133" font-family="Liberation Sans" font-size="24" fill="#0c4246" text-anchor="middle" transform="rotate(-62 722 133)">o</text>
<text x="733" y="93" font-family="Liberation Sans" font-size="24" fill="#0c4246" text-anchor="middle" transform="rotate(-62 733 93)">c</text>
<text x="742" y="55" font-family="Liberation Sans" font-size="24" fill="#0c4246" text-anchor="middle" transform="rotate(-62 742 55)">h</text>
<text font-family="Liberation Sans" font-size="10.5" fill="#111" transform="translate(52,948) rotate(32)" textLength="140" lengthAdjust="spacingAndGlyphs">Stettenbach-Dorf-Hinterfeld</text>
<text font-family="Liberation Sans" font-size="10.5" fill="#111" transform="translate(242,1113) rotate(62)">Stetten</text>
<path d="M694,1024 L702,1032 M702,1024 L694,1032" stroke="#0c3e43" stroke-width="1.6"/>
<circle cx="883" cy="265" r="2.5" fill="#0c3e43"/>
<rect x="1103" y="952" width="14" height="14" fill="#fff" stroke="#888" stroke-width="2.5"/><circle cx="1110" cy="959" r="2.5" fill="#777"/>
<rect x="222" y="827" width="13" height="12" fill="none" stroke="#777" stroke-width="1.2" transform="rotate(-20 228 833)"/>
<rect x="303" y="737" width="13" height="13" fill="#fff" stroke="#111" stroke-width="1.5"/><path d="M304,748 L315,738" stroke="#111" stroke-width="1.5"/>
<path d="M1064,62 V88 M1058,88 H1071 M1057,70 H1071" stroke="#0c3e43" stroke-width="2.6" fill="none"/>
<g transform="translate(959,223)">
 <path d="M23,0.5 C35.5,0.5 45.5,10.5 45.5,23 C45.5,31 41,37 36,43 L23,60.5 L10,43 C5,37 0.5,31 0.5,23 C0.5,10.5 10.5,0.5 23,0.5 Z" fill="#fff"/>
 <path d="M23,2.6 C34.3,2.6 43.4,11.7 43.4,23 C43.4,30.3 39.3,35.8 34.6,41.6 L23,57 L11.4,41.6 C6.7,35.8 2.6,30.3 2.6,23 C2.6,11.7 11.7,2.6 23,2.6 Z" fill="#0a6aa2"/>
 <circle cx="23.3" cy="23" r="14.4" fill="#fff"/>
 <path d="M12.5,37 C14.5,33 14.3,29 14.3,26 C14.3,20.5 18.3,16.5 23.3,16.5 C28.3,16.5 32.3,20.5 32.3,26 C32.3,29 32,33 34,37 Z" fill="#0a6aa2"/>
 <path d="M22.2,15.5 L24.4,15.5 L24.6,24 L29.5,19.5 L30.5,21 L25.2,27 L25.8,33 L28.3,39 L30.2,43.5 L23.4,51 L16.6,43.5 L18.6,39 L21,33 L21.5,28 L16,22.5 L17.2,21 L22,25.5 Z" fill="#fff"/>
</g>
</svg>

<div style="position:absolute;left:1001px;top:18px;width:203px;height:42px;background:#fff;border-radius:9px;box-shadow:0 1px 3px rgba(0,0,0,.18)">
 <svg width="203" height="42" style="position:absolute;left:0;top:0">
  <g fill="none" stroke="#0b5a62" stroke-width="1.9" stroke-linejoin="round"><path d="M21.5,12.5 L30.5,17 L21.5,21.5 L12.5,17 Z"/><path d="M12.5,21.5 L21.5,26 L30.5,21.5"/><path d="M12.5,25.5 L21.5,30 L30.5,25.5"/></g>
  <text x="39" y="43.7" font-family="Liberation Sans" font-size="14" font-weight="700" fill="#0b5a62" textLength="87" lengthAdjust="spacingAndGlyphs" transform="translate(0,-18)">Kartenebenen</text>
  <path d="M178,18.5 L183,23.5 L188,18.5" fill="none" stroke="#0b5a62" stroke-width="2.2"/>
 </svg>
</div>
<div style="position:absolute;left:1171px;top:1070px;width:34px;height:68px;background:#f6f6f6;border-radius:7px;box-shadow:0 0 0 3px rgba(0,0,0,.1)">
 <svg width="34" height="68" style="position:absolute;left:0;top:0"><path d="M0,33.5 H34" stroke="#d5d5d5" stroke-width="1"/><g stroke="#0b5a62" stroke-width="2.8"><path d="M17,10 V24 M10,17 H24"/><path d="M10.5,51 H23.5"/></g></svg>
</div>
<div style="position:absolute;left:1032px;top:1109px;width:131px;height:28px;background:#f7f7f7;border-radius:6px;box-shadow:0 0 0 3px rgba(0,0,0,.07)">
 <svg width="131" height="28" style="position:absolute;left:0;top:0"><path d="M4.8,3 V20 Q4.8,22.5 7.3,22.5 H124 Q126.5,22.5 126.5,20 V3" fill="none" stroke="#0b5a62" stroke-width="1.8"/><text x="53.5" y="16.3" font-family="Liberation Sans" font-size="10.5" font-weight="400" stroke="#0b5a62" stroke-width="0.35" fill="#0b5a62" textLength="24.5" lengthAdjust="spacingAndGlyphs">100 m</text></svg>
</div>
</div>
<div id="panel">
<svg width="800" height="1155" viewBox="1225 0 800 1155" style="position:absolute;left:0;top:0">
<defs>
<linearGradient id="sh1" x1="0" y1="0" x2="0" y2="1"><stop offset="0" stop-color="#fff"/><stop offset="1" stop-color="#c9c9c9"/></linearGradient>
<linearGradient id="sh2" x1="0" y1="0" x2="0" y2="1"><stop offset="0" stop-color="#00616a"/><stop offset="1" stop-color="#3d6d70"/></linearGradient>
</defs>
<rect x="1225" y="0" width="800" height="1155" fill="#fff"/>
<rect x="1225" y="213" width="800" height="21" fill="url(#sh1)"/>
<rect x="1225" y="234" width="800" height="867" fill="#00616a"/>
<rect x="1225" y="1084" width="800" height="17" fill="url(#sh2)"/>
<rect x="1225" y="1101" width="800" height="54" fill="#ececec"/>
<rect x="1492" y="1101" width="266" height="54" fill="#fff"/>
<path d="M1616,1101.5 L1625,1094.5 L1634,1101.5 Z" fill="#fff"/>
<g transform="translate(1257,26) scale(0.435)">
 <path d="M23,2.6 C34.3,2.6 43.4,11.7 43.4,23 C43.4,30.3 39.3,35.8 34.6,41.6 L23,57 L11.4,41.6 C6.7,35.8 2.6,30.3 2.6,23 C2.6,11.7 11.7,2.6 23,2.6 Z" fill="#0a6aa2"/>
 <circle cx="23.3" cy="23" r="14.4" fill="#fff"/>
 <path d="M12.5,37 C14.5,33 14.3,29 14.3,26 C14.3,20.5 18.3,16.5 23.3,16.5 C28.3,16.5 32.3,20.5 32.3,26 C32.3,29 32,33 34,37 Z" fill="#0a6aa2"/>
 <path d="M22.2,15.5 L24.4,15.5 L24.6,24 L29.5,19.5 L30.5,21 L25.2,27 L25.8,33 L28.3,39 L30.2,43.5 L23.4,51 L16.6,43.5 L18.6,39 L21,33 L21.5,28 L16,22.5 L17.2,21 L22,25.5 Z" fill="#fff"/>
</g>
<text x="1306" y="41" font-family="Liberation Sans" font-size="15" font-weight="400" fill="#1c1c1c" textLength="131" lengthAdjust="spacingAndGlyphs">2'646'862, 1'222'606</text>
<rect x="1710" y="18" width="163" height="40" rx="8" fill="#fff" stroke="#0b5a62" stroke-width="2"/>
<text x="1722" y="43.3" font-family="Liberation Sans" font-size="14.6" font-weight="700" fill="#0b5a62" textLength="111" lengthAdjust="spacingAndGlyphs">Sprache und Profil</text>
<path d="M1846,37 L1850.5,41.5 L1855,37" fill="none" stroke="#0b5a62" stroke-width="2"/>
<rect x="1889" y="18" width="118" height="41" rx="8" fill="#fff" stroke="#0b5a62" stroke-width="2"/>
<path d="M1897,17 H1950 V60 H1897 A8,8 0 0 1 1889,52 V25 A8,8 0 0 1 1897,17 Z" fill="#0b5a62"/>
<path d="M1907,30.5 L1913,28 L1919,30.5 L1925,28 L1929.5,30.5 V47.5 L1925,45.5 L1919,48 L1913,45.5 L1907,48 Z M1913,28 V45.5 M1919,30.5 V48 M1925,28 V45.5" fill="none" stroke="#fff" stroke-width="2" stroke-linejoin="round"/>
<path d="M1983,34 V47.5 H1969 V31 H1979" fill="none" stroke="#0b5a62" stroke-width="2.2"/>
<path d="M1973,43 L1974,39 L1985.5,27.5 L1988.5,30.5 L1977,42 Z" fill="none" stroke="#0b5a62" stroke-width="1.9" stroke-linejoin="round"/>
<text x="1243" y="93.2" font-family="Liberation Sans" font-size="13" font-weight="700" fill="#0b5a62" textLength="70" lengthAdjust="spacingAndGlyphs">Standortstyp</text>
<rect x="1244" y="102" width="763" height="48" rx="6" fill="#fff" stroke="#0b5a62" stroke-width="2.2"/>
<text x="1256" y="132" font-family="Liberation Sans" font-size="18.3" font-weight="700" fill="#0b5a62" textLength="426" lengthAdjust="spacingAndGlyphs">7b&#160;&#160;-&#160;&#160;Waldmeister-Buchenwald mit Lockerähriger Segge</text>
<path d="M1964,121 L1972,129 M1972,121 L1964,129" stroke="#111" stroke-width="2.4"/>
<path d="M1983.5,123 L1988.5,128 L1993.5,123" fill="none" stroke="#111" stroke-width="2.2"/>
<rect x="1244" y="180" width="40" height="19" rx="9.5" fill="#d9d9d9" stroke="#0b5a62" stroke-width="2"/>
<circle cx="1253.5" cy="189.5" r="8.5" fill="#fff" stroke="#0b5a62" stroke-width="2"/>
<text x="1291.5" y="192" font-family="Liberation Sans" font-size="12.4" font-weight="700" fill="#8c8c8c" textLength="104" lengthAdjust="spacingAndGlyphs">Übergangsstandort</text>
<text x="1243.5" y="276.7" font-family="Liberation Sans" font-size="22" font-weight="700" fill="#fff" textLength="109.4" lengthAdjust="spacingAndGlyphs">Empfehlung</text>
<rect x="1651.5" y="262.5" width="17" height="17" rx="3" fill="none" stroke="#7aa5a8" stroke-width="1"/>
<path d="M1655,271 L1658.5,275.5 L1665.5,266" fill="none" stroke="#f1e6ad" stroke-width="1.6"/>
<text x="1678" y="275.2" font-family="Liberation Sans" font-size="13.6" font-weight="700" fill="#efe3a8" textLength="181" lengthAdjust="spacingAndGlyphs">Künftig zusätzlich passende Arten</text>
<rect x="1872.5" y="262.5" width="17" height="17" rx="3" fill="none" stroke="#7aa5a8" stroke-width="1"/>
<text x="1899" y="275.2" font-family="Liberation Sans" font-size="13.4" font-weight="400" fill="#dde9ea" textLength="101" lengthAdjust="spacingAndGlyphs">Lateinische Namen</text>
<circle cx="1278" cy="354" r="19" fill="#fff"/>
<circle cx="1278" cy="454" r="19" fill="#fff"/>
<circle cx="1278" cy="554" r="19" fill="#fff"/>
<path d="M1278,364 V345 M1270.5,352 L1278,344.5 L1285.5,352" fill="none" stroke="#00616a" stroke-width="4" stroke-linecap="round" stroke-linejoin="round"/>
<path d="M1269.5,455 L1275.5,461 L1287,449.5" fill="none" stroke="#00616a" stroke-width="4.2" stroke-linecap="round" stroke-linejoin="round"/>
<path d="M1278,544 V563 M1270.5,556 L1278,563.5 L1285.5,556" fill="none" stroke="#00616a" stroke-width="4" stroke-linecap="round" stroke-linejoin="round"/>
<text x="1326.3" y="362.2" font-family="Liberation Sans" font-size="19" font-weight="700" fill="#fff" textLength="175.6" lengthAdjust="spacingAndGlyphs">Tanne Buche Stieleiche</text>
<text x="1327" y="425.3" font-family="Liberation Sans" font-size="19" font-weight="700" fill="#fff" textLength="613" lengthAdjust="spacingAndGlyphs">Spitzahorn Bergahorn Schwarzerle<tspan font-size="11" dy="-7">*</tspan><tspan dy="7"> </tspan>Grauerle<tspan font-size="11" dy="-7">*</tspan><tspan dy="7"> </tspan>Hängebirke<tspan font-size="11" dy="-7">*</tspan><tspan dy="7"> </tspan>Hagebuche Kastanie<tspan font-size="12" dy="-7">†</tspan></text>
<text x="1327" y="449.8" font-family="Liberation Sans" font-size="19" font-weight="700" fill="#fff" textLength="658" lengthAdjust="spacingAndGlyphs">Esche<tspan font-size="11" dy="-7">†</tspan><tspan dy="7"> </tspan>Stechpalme Lärche Fichte Waldföhre Zitterpappel<tspan font-size="11" dy="-7">*</tspan><tspan dy="7"> </tspan>Kirschbaum Traubenkirsche</text>
<text x="1327" y="474.0" font-family="Liberation Sans" font-size="19" font-weight="700" fill="#fff" textLength="651" lengthAdjust="spacingAndGlyphs">Traubeneiche Salweide<tspan font-size="11" dy="-7">*</tspan><tspan dy="7"> </tspan>Vogelbeere Eibe Winterlinde Bergulme<tspan font-size="11" dy="-7">†</tspan><tspan dy="7"> </tspan>Douglasie<tspan font-size="11" dy="-7">°</tspan><tspan dy="7"> </tspan>Roteiche<tspan font-size="11" dy="-7">°</tspan></text>
<text x="1327" y="498.8" font-family="Liberation Sans" font-size="19" font-weight="700" fill="#fff" textLength="64" lengthAdjust="spacingAndGlyphs">Robinie<tspan font-size="11" dy="-7">°</tspan></text>
<rect x="1243.75" y="629.75" width="763.5" height="70.5" rx="6" fill="#03535b" stroke="#e9f0f0" stroke-width="1.5"/>
<text x="1265" y="659.8" font-family="Liberation Sans" font-size="13.4" font-weight="400" fill="#f2f2f2" textLength="680" lengthAdjust="spacingAndGlyphs">Hier ändert sich zwar die Höhenstufe nicht; unter den empfohlenen Baumarten sollen aber diejenigen bevorzugt</text>
<text x="1265" y="680.5" font-family="Liberation Sans" font-size="13.4" font-weight="400" fill="#f2f2f2" textLength="341.5" lengthAdjust="spacingAndGlyphs">werden, die Wärme und Trockenheit am besten ertragen</text>
<rect x="1817" y="718" width="191" height="41" rx="6" fill="#03535b"/>
<text x="1838.5" y="744.5" font-family="Liberation Sans" font-size="14.6" font-weight="700" fill="#fff" textLength="148.2" lengthAdjust="spacingAndGlyphs">Empfehlung exportieren</text>
<path d="M1352.8,1111 H1360.6 L1365.1,1115.6 V1129.8 Q1365.1,1130.9 1364,1130.9 H1352.8 Q1351.8,1130.9 1351.8,1129.8 V1112 Q1351.8,1111 1352.8,1111 Z M1360.2,1111.5 V1117.3 H1365" fill="none" stroke="#0b5a62" stroke-width="1.9" stroke-linejoin="round"/>
<path d="M1355.8,1126.1 H1361.6" stroke="#0b5a62" stroke-width="1.9" stroke-linecap="round"/>
<path d="M1619.6,1120.4 A6.2,6.2 0 1 1 1629.4,1120.4" fill="none" stroke="#0b5a62" stroke-width="3.3"/>
<path d="M1624,1112.8 H1625.2 L1625.6,1121 L1626.9,1131 H1622.2 L1623.4,1121 Z" fill="#0b5a62"/>
<path d="M1620.3,1117.2 L1624,1119.6 M1628.6,1116.3 L1625.2,1118.8" stroke="#0b5a62" stroke-width="1.2"/>
<circle cx="1891.4" cy="1113.3" r="2.4" fill="#0b5a62"/><path d="M1888,1117.2 H1892.9 V1125.3 H1895 V1128.8 H1888 V1125.3 H1889.8 V1120.6 H1888 Z" fill="#0b5a62"/>
<text x="1332" y="1146" font-family="Liberation Sans" font-size="14.4" font-weight="400" fill="#1b6369" textLength="53" lengthAdjust="spacingAndGlyphs">Standort</text>
<text x="1589" y="1146" font-family="Liberation Sans" font-size="14.4" font-weight="400" fill="#1b6369" textLength="72.5" lengthAdjust="spacingAndGlyphs">Empfehlung</text>
<text x="1877" y="1146" font-family="Liberation Sans" font-size="14.4" font-weight="400" fill="#1b6369" textLength="30" lengthAdjust="spacingAndGlyphs">Infos</text>
</svg>
</div>
</body></html>
